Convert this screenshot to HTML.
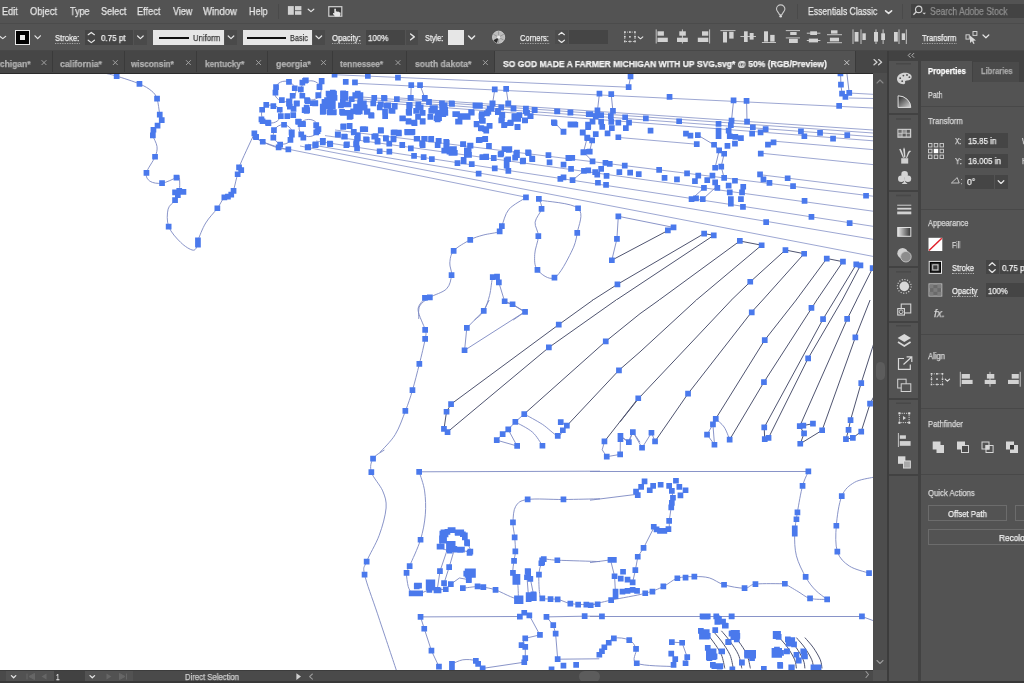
<!DOCTYPE html>
<html><head><meta charset="utf-8"><title>Adobe Illustrator</title>
<style>
html,body{margin:0;padding:0;background:#535353;}
body{width:1024px;height:683px;position:relative;overflow:hidden;font-family:"Liberation Sans",sans-serif;}
.a{position:absolute;}
.t{position:absolute;white-space:nowrap;transform-origin:0 0;display:inline-block;will-change:transform;-webkit-text-stroke:0.25px;}
svg{position:absolute;overflow:visible;}
.ic{fill:#d6d6d6;}
</style></head><body>
<!-- canvas -->
<div class="a" style="left:0;top:74px;width:873px;height:596px;background:#fff;overflow:hidden"></div>
<div class="a" style="left:0;top:0;width:873px;height:670px;overflow:hidden">
<svg id="art" width="873" height="596" viewBox="0 74 873 596" style="position:absolute;left:0;top:74px">
<path d="M334 74.7 L628.6 87.2 M849 93 L873 94.3 M355 83.3 L873 108 M395 97.7 L873 130 M360 96.9 L873 133 M345 97.8 L873 136.7 M340 99.5 L873 140.8 M773 141.1 L873 149.6 M288.8 149.3 L526 197.2 M300 146 L873 256.4 M308 144.3 L873 239.3 M316 141 L873 226.3 M325 135.6 L873 211.2 M335 130 L873 196.2 M760 174.7 L873 188.7 M618 137.4 L696.6 144.2 M761 153.2 L873 164.6 M849 98 L873 98.5" fill="none" stroke="#98a2d0" stroke-width="0.95"/>
<path d="M105.6 73.3 C107.4 73.8 111 74.4 116.7 76.1 C122.3 77.9 133.7 81.4 139.5 83.9 C145.3 86.4 148.5 88.4 151.5 90.9 C154.4 93.3 155.6 94.7 157 98.6 C158.4 102.6 159 110.9 159.8 114.5 C160.6 118.1 162.1 118.2 161.7 120.1 C161.4 121.9 159 124 157.6 125.6 C156.2 127.2 154.2 128.2 153.4 129.8 C152.6 131.4 152.2 132.6 152.8 135.4 C153.4 138.1 156.6 142.9 157 146.5 C157.4 150.1 156.8 152.4 155.1 156.8 C153.3 161.2 147.3 168.8 146.4 172.9 C145.6 177 147.5 179.5 150.1 181.3 C152.7 183 157.6 183.8 162 183.2 C166.4 182.6 173.6 178.7 176.5 177.6 C179.4 176.5 178.8 174.3 179.3 176.5 C179.7 178.7 180 187 179.3 191 C178.6 194.9 176.9 197.2 175.1 200.2 C173.2 203.2 169.2 204.7 168.1 209.1 C167.1 213.5 166.6 221 168.7 226.6 C170.8 232.1 176.6 238.5 180.7 242.4 C184.7 246.4 190.3 249.9 193.2 250.2 C196 250.6 197.1 245.6 197.9 244.7 M197.9 240.2 C199.2 237.3 202.4 228.3 205.7 223 C208.9 217.6 214.3 212.5 217.4 208.2 C220.5 204 222 199.7 224.3 197.4 C226.6 195.1 229.7 196.1 231.3 194.6 C232.9 193.1 233 191.6 234.1 188.2 C235.1 184.8 236.5 177.3 237.7 174.3 C238.9 171.3 241.1 171.3 241.3 170.1 C241.5 169 236.9 173.5 239.1 167.3 C241.2 161.2 251.8 139.1 254.4 133.4 M254.4 133.4 C254.6 134 254.4 135.4 255.8 136.8 C257.1 138.1 259 139.9 262.7 141.8 C266.4 143.6 273.8 146.6 278 147.9 C282.2 149.1 286.3 149 288 149.3 M526.1 197.5 C523.2 199.5 513 204.6 508.9 209.3 C504.9 214.1 503.4 222.4 501.8 226.1 C500.3 229.8 502.8 230 499.7 231.5 C496.6 233 488 233.7 483.1 235.1 C478.2 236.5 475.1 237.2 470.2 239.8 C465.3 242.5 457.1 246.9 453.7 250.8 C450.3 254.7 450.2 259 449.8 263 C449.5 267.1 452.1 270.8 451.5 275.1 C451 279.4 450.2 285.1 446.6 288.8 C443 292.6 434.3 294.6 429.8 297.4 C425.4 300.3 421.6 302.4 419.7 306 C417.9 309.6 418.9 316.8 418.7 318.9 M539.4 200.1 C545.9 201.5 571.8 202.8 578.1 208.3 C584.4 213.7 578.4 225.6 577.2 233 C576.1 240.3 575 244.9 571.2 252.3 C567.4 259.8 560.1 274.7 554.5 277.7 C548.8 280.6 540.8 273.8 537.5 269.9 C534.2 266.1 534.5 260.1 534.7 254.5 C534.8 248.8 538.3 241.6 538.3 236.2 C538.4 230.8 534.6 226.8 535.1 222.2 C535.7 217.7 540.8 212.6 541.6 208.9 C542.3 205.2 539.8 201.6 539.4 200.1 M497.1 276.6 C496.4 276.7 494 273.9 492.8 277 C491.5 280.1 491.1 289.6 489.6 295.3 C488.1 300.9 486.3 306.8 483.8 311 C481.3 315.1 476.1 318.5 474.5 320 M497.1 276.6 L498.8 282.4 L504.6 301.3 L512.6 304.3 L525 311.8 L513.2 320 M423.2 300 C422.3 301.7 417.7 305.2 418.1 310.2 C418.4 315.1 424 325.2 425.2 330 C426.4 334.7 426.2 333.2 425.2 338.8 C424.2 344.5 421.5 355.4 419.4 364 C417.2 372.5 414.8 382.3 412.5 390.1 C410.2 398 408.3 403.6 405.4 411 C402.5 418.4 399.5 427.7 395.2 434.6 C391 441.5 382.5 449.4 380 452.3 M489.2 300 L483.6 310.9 L466.8 327.9 L464.6 350.3 L524.7 311.9 L512 304.3 L504.4 302 M524.2 414 C527.3 415.7 536.9 420.8 542.5 424.4 C548.1 428.1 554.3 434.9 557.7 435.8 C561.1 436.8 561.3 431.9 562.8 430.3 C564.3 428.6 567.2 427 566.9 425.7 C566.5 424.3 561.8 422.7 560.8 422.1 M515.3 421.9 C518.2 423.6 527.8 428.1 532.3 432 C536.9 436 540.8 443.5 542.5 445.7 M508.2 429.5 L517.1 446 L496.8 440.2 L502.6 434.1 L508.2 429.5 L515.3 421.9 L524.2 414 M604.5 441.4 L602.2 449.8 L606.7 456.7 L620.2 454.4 L620.4 435.8 L628.8 442.2 L632.9 432 L640 442.2 M715.7 418.8 C717.1 420.2 721.8 423.5 724.1 427 C726.4 430.4 728.8 437.5 729.7 439.6 M715.7 418.8 L712.9 424.4 L707.1 434.6 L714.5 444.7 L712.9 424.4 M620 435.8 L628.4 442.2 L632.7 431.5 L642.1 447.8 L651.5 432.8 L655 441.4 M667.9 230.5 L673.5 227.4 L618.3 216.3 L616.9 239 L611.8 260.2 M384.4 450 C382.5 451.4 375.3 454.8 373.1 458.5 C370.9 462.2 369.8 466.8 371.4 472.2 C373 477.6 380.2 485 382.7 490.9 C385.1 496.9 386.6 500.6 386.1 508 C385.5 515.4 382.5 526.4 379.2 535.3 C376 544.2 369.1 555 366.6 561.6 C364.2 568.1 362.7 565.8 364.6 574.5 C366.4 583.2 372.2 597.9 377.5 613.8 C382.8 629.7 393.2 660.7 396.3 670.1 M419.2 471.8 L600 471.2 M419.2 471.8 C420.1 475 423.6 483.8 424.6 490.9 C425.6 498.1 426 506.7 425.3 514.8 C424.6 523 423.1 531.2 420.5 539.7 C417.9 548.3 411.9 560.5 409.6 566 C407.3 571.5 406.8 569.4 406.5 572.8 C406.3 576.2 407.4 583.1 408.2 586.5 C409.1 589.9 411.1 592.2 411.7 593.3 M411.7 593.3 L420.2 593.3 L429.4 589.9 L437.2 589.9 L445.8 589.2 L450.9 584.1 L459.4 578 L469 579.7 L472 572.2 L466.2 573.5 M437.2 589.9 L440 571.1 L447.5 549 M444.1 583.1 L449.2 567 L454.3 549.6 M462.8 588.2 C465.3 587.9 474.1 586.7 477.5 586.5 C480.9 586.3 480.3 586.6 483.3 587.2 C486.3 587.7 491 588.3 495.6 589.9 C500.1 591.5 506.8 595.2 510.6 596.7 C514.4 598.3 517.1 598.7 518.5 599.1 M442.4 533.6 C444.1 533 449.2 530.1 452.6 530.2 C456 530.3 460.4 532.3 462.8 534.3 C465.2 536.3 465.7 539.2 466.9 542.1 C468.2 545 471.5 550.4 470.3 551.7 C469.2 553 463.5 550.1 460.1 550 C456.7 549.8 453.1 551.2 449.9 550.7 C446.6 550.1 441.9 549.4 440.7 546.6 C439.4 543.7 442.1 535.8 442.4 533.6 M600 498.8 C593.9 498.9 575.5 499.4 563.5 499.5 C551.4 499.6 535.6 498.3 527.7 499.5 C519.7 500.6 518.2 502.5 515.7 506.3 C513.3 510.1 513.2 517.2 513 522.3 C512.8 527.5 514.3 532.5 514.7 537.3 C515.1 542.2 515.5 547.4 515.4 551.3 C515.3 555.3 514.4 557.3 514 560.9 C513.6 564.5 512.4 569.4 513 572.8 C513.6 576.2 516.5 577 517.4 581.4 C518.3 585.7 518.3 596.2 518.5 599.1 M600 561.6 C592.9 561.3 566.7 560.6 557.3 560.2 C548 559.8 546.4 558.7 543.7 559.2 C541 559.7 542.1 560.7 541.3 563.3 C540.5 565.8 539.2 569.5 538.9 574.5 C538.6 579.5 539 589.3 539.6 593.3 C540.2 597.3 539.3 597.4 542.3 598.4 C545.3 599.4 553 598.6 557.7 599.4 C562.4 600.3 565.5 602.7 570.3 603.5 C575.1 604.4 581.4 604.5 586.4 604.6 C591.3 604.7 597.7 604.3 600 604.2 M527.7 571.1 L527 577.3 L528.7 599.1 M530.4 579 L533.5 594.3 M420.5 616.9 L519.8 616.5 M420.5 616.9 L424.3 628.8 L431.4 650.6 L439 666.7 M524.3 612.8 L529.4 615.5 L539.9 634.9 L525.3 638.3 L521.5 645.2 L525.3 646.9 L525.3 658.1 L524.3 662.2 L482.6 668.4 M451.9 663.9 C453.7 663.3 458.9 660.4 462.8 659.8 C466.8 659.3 472.5 659.4 475.8 660.9 C479.1 662.3 481.5 667.1 482.6 668.4 M546.4 616.9 L584.6 616.2 L600 616.2 M546.4 616.9 L553.3 625 L555.6 633.6 L557.7 659.2 L599.3 658.8 M590 471.5 L808.4 471.5 M808.4 471.5 C807.4 473.9 804.4 479 802.6 485.8 C800.7 492.6 798.7 504.5 797.4 512.4 C796.1 520.4 794.9 526.4 794.7 533.6 C794.5 540.8 794.6 548.5 796.4 555.8 C798.2 563 802.5 571.2 805.6 576.9 C808.8 582.6 811.6 586.1 815.2 589.9 C818.8 593.6 825.1 597.8 827.1 599.4 M784.8 583.7 C787 585 793.9 589.1 798.1 591.6 C802.3 594 805.2 597.1 810.1 598.4 C814.9 599.7 824.3 599.3 827.1 599.4 M873.2 477.3 C870 478.1 859.6 479.3 854.4 482.4 C849.2 485.5 844.8 488.8 841.8 496.1 C838.8 503.3 837.1 516.5 836.3 525.7 C835.6 535 835.2 545 837.4 551.7 C839.5 558.4 844 562.4 849.3 566 C854.6 569.6 865.8 572 869.1 573.2 M590 500.2 L636.1 494.4 M590 605.2 C593.5 604.4 601.9 602.1 611.2 600.1 C620.4 598.1 636.6 595.6 645.3 593.3 C654 591 658 589 663.4 586.5 C668.7 584 672.2 579.9 677.3 578.3 C682.5 576.6 689.1 576.6 694.4 576.6 C699.7 576.5 704.5 576.6 709.4 577.9 C714.4 579.3 718.2 583.1 724.1 584.8 C729.9 586.5 739.3 588.3 744.6 588.2 C749.8 588.1 748.8 584.8 755.5 584.1 C762.2 583.3 779.9 583.8 784.8 583.7 M653.8 527.8 L643.6 547.9 L637.8 556.8 L635.4 570.1 L632.6 582.4 M669.2 521 C669 522.3 670 527.3 668.5 529.2 C666.9 531 662.4 532.1 659.9 531.9 C657.5 531.7 654.8 528.5 653.8 527.8 M671.9 490.9 L672.9 497.8 L671.2 507.3 L669.2 521 M590 562.6 L610.5 559.9 L614.6 576.2 L615.6 596 M590 616.5 L861.9 616.5 L873.2 620.6 M600.2 656.4 C600.9 654.9 602.1 650.2 604.3 647.2 C606.6 644.2 609.7 639.5 613.9 638.3 C618 637.1 625.5 638.3 629.2 640 C632.9 641.8 634.8 645 636.1 648.9 C637.3 652.8 630.5 660.3 636.7 663.2 C643 666.2 667.4 666.1 673.6 666.6 M671.9 642.1 L682.1 642.8 L687.2 657.1 L685.5 663.2 M840.5 70 L840.9 84.6 L842 93.6 M846.5 70 L849.2 92.9 M494.8 89.3 L492.6 103.3 M506.2 88.9 L508.3 103.3 M599.4 93.6 L597.5 110.4 M611.2 94.1 L612.9 110.8 M630.6 76.4 L628.6 87.2 M733.6 100.3 L731.5 120.5 M746.6 101 L747 121.7 M411.2 85 L410.8 97.9 M420 85 L424.8 97.9 M714 144.8 L719.2 150.4 L715.1 167.7 M724.1 153.8 L721.2 166.6 L724.1 177.8 M697.8 135.1 L714 144.8 M583.5 152.1 L587.2 137.7 M589.7 151.6 L592.1 140.5 M583.5 152.1 L592.5 161.3 M553.9 122.2 L563.5 131.7 M572.6 180 L583.9 171 M691.6 199.2 L703.9 187.9 M702.8 199.2 L715.1 187.9 M295.9 91.5 C295.7 92.2 295.5 94.6 294.8 96 C294.1 97.3 293 98.6 291.8 99.5 C290.6 100.5 289 101.2 287.5 101.5 C286 101.9 284.2 101.9 282.7 101.5 C281.2 101.2 279.6 100.5 278.4 99.5 C277.2 98.6 276.1 97.3 275.4 96 C274.8 94.6 274.4 93 274.4 91.5 C274.4 90 274.8 88.4 275.4 87 C276.1 85.7 277.2 84.4 278.4 83.4 C279.6 82.5 281.2 81.8 282.7 81.4 C284.2 81.1 286 81.1 287.5 81.4 C289 81.8 290.6 82.5 291.8 83.4 C293 84.4 294.1 85.7 294.8 87 C295.5 88.4 295.7 90.7 295.9 91.5 M321.2 90.4 C321 91.1 320.8 93.3 320.2 94.6 C319.5 95.9 318.5 97.1 317.3 98 C316.2 98.8 314.6 99.5 313.2 99.8 C311.7 100.1 310.1 100.1 308.6 99.8 C307.1 99.5 305.6 98.8 304.5 98 C303.3 97.1 302.3 95.9 301.6 94.6 C301 93.3 300.6 91.8 300.6 90.4 C300.6 89 301 87.5 301.6 86.2 C302.3 85 303.3 83.7 304.5 82.9 C305.6 82 307.1 81.3 308.6 81 C310.1 80.7 311.7 80.7 313.2 81 C314.6 81.3 316.2 82 317.3 82.9 C318.5 83.7 319.5 85 320.2 86.2 C320.8 87.5 321 89.7 321.2 90.4 M280.8 114 C280.7 114.7 280.5 116.8 279.9 118 C279.3 119.1 278.3 120.3 277.2 121.1 C276.1 121.9 274.7 122.5 273.3 122.8 C271.9 123.1 270.4 123.1 269 122.8 C267.6 122.5 266.2 121.9 265.1 121.1 C264 120.3 263 119.1 262.4 118 C261.8 116.8 261.5 115.3 261.5 114 C261.5 112.7 261.8 111.3 262.4 110.1 C263 109 264 107.8 265.1 107 C266.2 106.2 267.6 105.5 269 105.2 C270.4 105 271.9 105 273.3 105.2 C274.7 105.5 276.1 106.2 277.2 107 C278.3 107.8 279.3 109 279.9 110.1 C280.5 111.3 280.7 113.4 280.8 114 M292.6 134.5 C292.5 135.2 292.3 137.4 291.7 138.6 C291.1 139.9 290.1 141.1 289 142 C287.9 142.9 286.5 143.6 285.1 143.9 C283.8 144.2 282.2 144.2 280.8 143.9 C279.5 143.6 278 142.9 276.9 142 C275.8 141.1 274.9 139.9 274.3 138.6 C273.7 137.4 273.3 135.9 273.3 134.5 C273.3 133.1 273.7 131.5 274.3 130.3 C274.9 129 275.8 127.8 276.9 126.9 C278 126 279.5 125.3 280.8 125 C282.2 124.7 283.8 124.7 285.1 125 C286.5 125.3 287.9 126 289 126.9 C290.1 127.8 291.1 129 291.7 130.3 C292.3 131.5 292.5 133.8 292.6 134.5 M318.4 128 C318.3 128.6 318.1 130.6 317.5 131.7 C316.9 132.9 315.9 134 314.8 134.7 C313.7 135.5 312.3 136.1 310.9 136.4 C309.5 136.7 308 136.7 306.6 136.4 C305.2 136.1 303.8 135.5 302.7 134.7 C301.6 134 300.6 132.9 300 131.7 C299.4 130.6 299.1 129.3 299.1 128 C299.1 126.8 299.4 125.4 300 124.3 C300.6 123.2 301.6 122.1 302.7 121.3 C303.8 120.5 305.2 119.9 306.6 119.6 C308 119.4 309.5 119.4 310.9 119.6 C312.3 119.9 313.7 120.5 314.8 121.3 C315.9 122.1 316.9 123.2 317.5 124.3 C318.1 125.4 318.3 127.4 318.4 128 M254.6 132.3 C254.9 133.2 254.7 136.1 256.1 137.7 C257.5 139.3 259.4 140.4 263.2 142 C267 143.6 274.5 146.1 278.7 147.3 C282.9 148.6 286.7 149.1 288.3 149.5" fill="none" stroke="#7c88c2" stroke-width="0.9"/>
<path d="M593 300 L558.8 324.6 L451.1 404.1 L446.5 411.7 L444 429 L447.5 432 L548.8 347.5 L616.1 300 M640 313.7 L605.7 341.4 L524.2 414 M566.9 425.7 L618.9 370.3 L640 351.9 M638.2 398.3 L604.5 441.4 M659.2 300 L640 313.7 M696.4 300 L640 351.9 M731.5 300 L639 398 L620 421.9 M762.7 300 L751.5 312.2 L688 393.7 L655 441.4 M796.2 300 L764.7 340.1 L715.7 418.8 M816.8 300 L811.7 308.1 L764 382 L729.7 439.6 M834.7 300 L823.1 319 L764.2 427.5 L764.7 439.1 M842.2 300 L808.1 358.4 L768.5 437.9 L764.7 439.1 M856.7 300 L847.5 318.5 L799.8 426.2 M870.1 300 L855.4 337.3 L822.1 430.3 L800.3 443.7 L804.1 433.3 L799.8 426.2 L813 423.7 M873.9 343.2 L861.2 383 L850.5 420.1 L848.5 430 L846 439.1 L852.8 437.9 L861.2 431.5 L870.1 403.6 L873.9 396.5 M667.9 230.5 L611.8 260.2 M704.3 630.8 C705.7 632.5 710 637.1 712.8 641.1 C715.7 645 719.4 650.2 721.4 654.7 C723.3 659.3 724.2 666.1 724.8 668.4 M712.8 630.8 C714.2 632.5 718.5 637.1 721.4 641.1 C724.2 645 727.9 650.2 729.9 654.7 C731.9 659.3 732.7 666.1 733.3 668.4 M721.4 630.8 C722.8 632.5 727 637.1 729.9 641.1 C732.7 645 736.4 650.2 738.4 654.7 C740.4 659.3 741.3 666.1 741.8 668.4 M729.9 630.8 C731.3 632.5 735.6 637.1 738.4 641.1 C741.3 645 745 650.2 746.9 654.7 C748.9 659.3 749.8 666.1 750.4 668.4 M779.4 637.6 C780.8 639.4 785.3 644.2 787.9 647.9 C790.4 651.6 793.3 656.4 794.7 659.8 C796.1 663.2 796.1 666.9 796.4 668.4 M787.9 637.6 C789.3 639.4 793.9 644.2 796.4 647.9 C799 651.6 801.8 656.4 803.2 659.8 C804.7 663.2 804.7 666.9 804.9 668.4 M796.4 637.6 C797.8 639.4 802.4 644.2 804.9 647.9 C807.5 651.6 810.3 656.4 811.8 659.8 C813.2 663.2 813.2 666.9 813.5 668.4 M804.9 637.6 C806.4 639.4 810.9 644.2 813.5 647.9 C816 651.6 818.9 656.4 820.3 659.8 C821.7 663.2 821.7 666.9 822 668.4" fill="none" stroke="#4f5470" stroke-width="1"/>
<clipPath id="ce"><rect x="0" y="74" width="873" height="226"/></clipPath><path clip-path="url(#ce)" d="M704.1 233.6 L617.5 284.3 L590 301.9 M704.1 233.6 L713.8 235.3 L590 317.4 M739.8 241 L618.3 329.9 M739.8 241 L761.6 245.2 L660.8 329.9 M785.4 250 L750.3 281.8 L700.4 329.9 M785.4 250 L804.1 253.7 L751.7 312.3 L737.3 329.9 M826.8 258.5 L774.1 329.9 M826.8 258.5 L842.9 261.7 L811.5 307.8 L796.7 329.9 M856.2 264.5 L823.1 319.1 L816.6 329.9 M856.2 264.5 L860.5 265.3 L826.5 329.9 M872.6 268.2 L847.1 318.9 L840.6 329.9 M872.6 268.2 L880 269.9" fill="none" stroke="#4f5470" stroke-width="1"/>
<path d="M113.8 73.3h5.7v5.7h-5.7zM136.6 81.1h5.7v5.7h-5.7zM154.2 95.8h5.7v5.7h-5.7zM156.9 111.7h5.7v5.7h-5.7zM158.9 117.2h5.7v5.7h-5.7zM154.7 122.8h5.7v5.7h-5.7zM150.6 126.9h5.7v5.7h-5.7zM150 132.5h5.7v5.7h-5.7zM152.2 153.9h5.7v5.7h-5.7zM143.6 170.1h5.7v5.7h-5.7zM159.2 180.3h5.7v5.7h-5.7zM173.6 174.8h5.7v5.7h-5.7zM172.2 189.5h5.7v5.7h-5.7zM176.4 188.1h5.7v5.7h-5.7zM180.6 189h5.7v5.7h-5.7zM175 192.3h5.7v5.7h-5.7zM172.2 197.3h5.7v5.7h-5.7zM165.8 223.7h5.7v5.7h-5.7zM195.1 237.4h5.7v5.7h-5.7zM195.1 241.8h5.7v5.7h-5.7zM214.5 205.4h5.7v5.7h-5.7zM221.5 194.5h5.7v5.7h-5.7zM225.1 193.7h5.7v5.7h-5.7zM228.4 191.8h5.7v5.7h-5.7zM230.7 188.1h5.7v5.7h-5.7zM236.2 164.5h5.7v5.7h-5.7zM238.4 167.3h5.7v5.7h-5.7zM234.8 171.4h5.7v5.7h-5.7zM251.5 130.6h5.7v5.7h-5.7zM252.9 133.9h5.7v5.7h-5.7zM259.9 138.9h5.7v5.7h-5.7zM331.7 71.9h5.7v5.7h-5.7zM365 73h5.7v5.7h-5.7zM395.1 74.7h5.7v5.7h-5.7zM286.1 79h5.7v5.7h-5.7zM302.2 77.9h5.7v5.7h-5.7zM318.8 77.9h5.7v5.7h-5.7zM342.9 79h5.7v5.7h-5.7zM352.1 79.6h5.7v5.7h-5.7zM408.4 82.2h5.7v5.7h-5.7zM417.2 82.2h5.7v5.7h-5.7zM273.2 84.3h5.7v5.7h-5.7zM291.9 85.4h5.7v5.7h-5.7zM298 86.5h5.7v5.7h-5.7zM316.6 84.3h5.7v5.7h-5.7zM272.6 89.7h5.7v5.7h-5.7zM289.8 92.9h5.7v5.7h-5.7zM299.5 92.9h5.7v5.7h-5.7zM315.6 92.5h5.7v5.7h-5.7zM330 89.7h5.7v5.7h-5.7zM340.3 90.4h5.7v5.7h-5.7zM354.9 90.8h5.7v5.7h-5.7zM279 97.2h5.7v5.7h-5.7zM286.6 99.4h5.7v5.7h-5.7zM294.1 100.5h5.7v5.7h-5.7zM304.8 98.3h5.7v5.7h-5.7zM312.3 100.5h5.7v5.7h-5.7zM324.2 97.2h5.7v5.7h-5.7zM331.7 95.1h5.7v5.7h-5.7zM342.4 95.1h5.7v5.7h-5.7zM348.9 96.2h5.7v5.7h-5.7zM357.5 95.1h5.7v5.7h-5.7zM371.4 95.1h5.7v5.7h-5.7zM381.1 95.1h5.7v5.7h-5.7zM394 96.2h5.7v5.7h-5.7zM408 95.1h5.7v5.7h-5.7zM421.9 95.1h5.7v5.7h-5.7zM263.4 102h5.7v5.7h-5.7zM270.5 103.2h5.7v5.7h-5.7zM276.9 106.9h5.7v5.7h-5.7zM287 103.7h5.7v5.7h-5.7zM303.8 104.7h5.7v5.7h-5.7zM319.9 103.7h5.7v5.7h-5.7zM327.4 101.5h5.7v5.7h-5.7zM338.1 102.6h5.7v5.7h-5.7zM345.6 101.5h5.7v5.7h-5.7zM353.2 103.7h5.7v5.7h-5.7zM361.8 104.7h5.7v5.7h-5.7zM370.4 100.5h5.7v5.7h-5.7zM377.9 101.5h5.7v5.7h-5.7zM385.4 102.6h5.7v5.7h-5.7zM391.8 103.7h5.7v5.7h-5.7zM406.9 102.6h5.7v5.7h-5.7zM415.5 101.5h5.7v5.7h-5.7zM426.2 99.4h5.7v5.7h-5.7zM439.1 100.5h5.7v5.7h-5.7zM448.8 100.5h5.7v5.7h-5.7zM259.3 106.9h5.7v5.7h-5.7zM278 113.3h5.7v5.7h-5.7zM284.4 113.3h5.7v5.7h-5.7zM290.4 112.3h5.7v5.7h-5.7zM303.8 108h5.7v5.7h-5.7zM319.9 109h5.7v5.7h-5.7zM327.4 108h5.7v5.7h-5.7zM339.2 109h5.7v5.7h-5.7zM346.7 110.1h5.7v5.7h-5.7zM355.3 109h5.7v5.7h-5.7zM363.9 109h5.7v5.7h-5.7zM368.2 112.3h5.7v5.7h-5.7zM382.2 109h5.7v5.7h-5.7zM389.7 108h5.7v5.7h-5.7zM405.8 109h5.7v5.7h-5.7zM413.3 108h5.7v5.7h-5.7zM419.8 110.1h5.7v5.7h-5.7zM428.4 108h5.7v5.7h-5.7zM434.8 110.1h5.7v5.7h-5.7zM442.3 106.9h5.7v5.7h-5.7zM453.1 111.2h5.7v5.7h-5.7zM258.6 116.6h5.7v5.7h-5.7zM265.1 119.8h5.7v5.7h-5.7zM281.2 121.9h5.7v5.7h-5.7zM295.2 118.7h5.7v5.7h-5.7zM299.5 120.9h5.7v5.7h-5.7zM313.4 122.6h5.7v5.7h-5.7zM315.6 126.2h5.7v5.7h-5.7zM340.3 124.1h5.7v5.7h-5.7zM346.7 123.4h5.7v5.7h-5.7zM347.8 113.3h5.7v5.7h-5.7zM399.4 115.5h5.7v5.7h-5.7zM405.8 118.7h5.7v5.7h-5.7zM411.2 119.8h5.7v5.7h-5.7zM419.8 118.7h5.7v5.7h-5.7zM434.8 116.6h5.7v5.7h-5.7zM455.2 118.7h5.7v5.7h-5.7zM271.1 127.3h5.7v5.7h-5.7zM288.7 129.5h5.7v5.7h-5.7zM298.4 131.6h5.7v5.7h-5.7zM313.4 129.5h5.7v5.7h-5.7zM334.9 131.6h5.7v5.7h-5.7zM341.3 133.8h5.7v5.7h-5.7zM351 129.5h5.7v5.7h-5.7zM360.7 126.2h5.7v5.7h-5.7zM377.9 127.3h5.7v5.7h-5.7zM391.8 129.5h5.7v5.7h-5.7zM396.1 130.5h5.7v5.7h-5.7zM404.7 129.5h5.7v5.7h-5.7zM409 129.5h5.7v5.7h-5.7zM270.5 134.8h5.7v5.7h-5.7zM287.6 137h5.7v5.7h-5.7zM300.5 134.8h5.7v5.7h-5.7zM319.9 138h5.7v5.7h-5.7zM327.4 141.3h5.7v5.7h-5.7zM354.2 135.9h5.7v5.7h-5.7zM363.9 137h5.7v5.7h-5.7zM371.4 133.8h5.7v5.7h-5.7zM374.6 138h5.7v5.7h-5.7zM383.2 135.9h5.7v5.7h-5.7zM390.8 135.9h5.7v5.7h-5.7zM414.4 135.9h5.7v5.7h-5.7zM421.9 135.9h5.7v5.7h-5.7zM428.4 135.9h5.7v5.7h-5.7zM435.9 138h5.7v5.7h-5.7zM443.4 139.1h5.7v5.7h-5.7zM275.8 144.5h5.7v5.7h-5.7zM285.5 146.6h5.7v5.7h-5.7zM304.8 144.5h5.7v5.7h-5.7zM312.3 142.3h5.7v5.7h-5.7zM343.5 142.3h5.7v5.7h-5.7zM353.2 141.3h5.7v5.7h-5.7zM354.2 145.6h5.7v5.7h-5.7zM376.8 148.4h5.7v5.7h-5.7zM386.5 148.8h5.7v5.7h-5.7zM399.4 142.3h5.7v5.7h-5.7zM408 145.6h5.7v5.7h-5.7zM419.8 142.3h5.7v5.7h-5.7zM434.8 142.3h5.7v5.7h-5.7zM443.4 143.4h5.7v5.7h-5.7zM449.8 146.6h5.7v5.7h-5.7zM411.2 153.1h5.7v5.7h-5.7zM420.8 154.2h5.7v5.7h-5.7zM429 156.3h5.7v5.7h-5.7zM446.6 148.8h5.7v5.7h-5.7zM452 149.9h5.7v5.7h-5.7zM454.6 160.2h5.7v5.7h-5.7zM627.7 73.6h5.7v5.7h-5.7zM625.8 84.3h5.7v5.7h-5.7zM491.9 86.5h5.7v5.7h-5.7zM503.3 86.1h5.7v5.7h-5.7zM596.6 90.8h5.7v5.7h-5.7zM608.4 91.2h5.7v5.7h-5.7zM472.6 102.6h5.7v5.7h-5.7zM476.9 102.6h5.7v5.7h-5.7zM489.8 100.5h5.7v5.7h-5.7zM505.5 100.5h5.7v5.7h-5.7zM510.6 105.4h5.7v5.7h-5.7zM523.1 105.8h5.7v5.7h-5.7zM531.7 106.9h5.7v5.7h-5.7zM554.2 108.4h5.7v5.7h-5.7zM567.6 109.5h5.7v5.7h-5.7zM594.6 107.5h5.7v5.7h-5.7zM610.1 108h5.7v5.7h-5.7zM439.3 105.8h5.7v5.7h-5.7zM442.5 110.1h5.7v5.7h-5.7zM457.6 113.3h5.7v5.7h-5.7zM462.9 113.3h5.7v5.7h-5.7zM468.9 109.7h5.7v5.7h-5.7zM479 111.2h5.7v5.7h-5.7zM485.5 109h5.7v5.7h-5.7zM488.7 105.8h5.7v5.7h-5.7zM495.2 108h5.7v5.7h-5.7zM498.4 104.7h5.7v5.7h-5.7zM499.5 112.3h5.7v5.7h-5.7zM512.3 113.3h5.7v5.7h-5.7zM516.6 112.3h5.7v5.7h-5.7zM524.2 110.1h5.7v5.7h-5.7zM527.4 113.3h5.7v5.7h-5.7zM587.5 111.2h5.7v5.7h-5.7zM592.9 113.3h5.7v5.7h-5.7zM598.3 112.3h5.7v5.7h-5.7zM608 113.3h5.7v5.7h-5.7zM622.3 114.4h5.7v5.7h-5.7zM643 115.5h5.7v5.7h-5.7zM473.7 120.9h5.7v5.7h-5.7zM479 117.6h5.7v5.7h-5.7zM486.6 123h5.7v5.7h-5.7zM482.3 126.2h5.7v5.7h-5.7zM478 125.2h5.7v5.7h-5.7zM498.4 117.6h5.7v5.7h-5.7zM501.6 121.9h5.7v5.7h-5.7zM508 119.8h5.7v5.7h-5.7zM514.5 124.1h5.7v5.7h-5.7zM522 117.6h5.7v5.7h-5.7zM551 119.4h5.7v5.7h-5.7zM560.7 128.8h5.7v5.7h-5.7zM568.2 121.9h5.7v5.7h-5.7zM572.5 121.9h5.7v5.7h-5.7zM580 129.5h5.7v5.7h-5.7zM585.4 123h5.7v5.7h-5.7zM589.7 118.7h5.7v5.7h-5.7zM598.3 118.7h5.7v5.7h-5.7zM599.4 124.1h5.7v5.7h-5.7zM604.7 130.5h5.7v5.7h-5.7zM609 125.2h5.7v5.7h-5.7zM608.4 119.1h5.7v5.7h-5.7zM615.5 119.8h5.7v5.7h-5.7zM623 125.2h5.7v5.7h-5.7zM626.2 119.8h5.7v5.7h-5.7zM615.5 134.4h5.7v5.7h-5.7zM647.7 127.7h5.7v5.7h-5.7zM476.9 137h5.7v5.7h-5.7zM482.3 135.9h5.7v5.7h-5.7zM486.1 143h5.7v5.7h-5.7zM584.3 134.8h5.7v5.7h-5.7zM589.3 137.6h5.7v5.7h-5.7zM592.9 131.2h5.7v5.7h-5.7zM441.4 147.7h5.7v5.7h-5.7zM460.4 141.3h5.7v5.7h-5.7zM467.2 142.8h5.7v5.7h-5.7zM464 148.8h5.7v5.7h-5.7zM466.2 152h5.7v5.7h-5.7zM501.6 146.2h5.7v5.7h-5.7zM505.9 147.1h5.7v5.7h-5.7zM498.4 150.9h5.7v5.7h-5.7zM513.4 150.9h5.7v5.7h-5.7zM512.3 154.8h5.7v5.7h-5.7zM525.2 149.4h5.7v5.7h-5.7zM529.5 156.3h5.7v5.7h-5.7zM545.6 152.4h5.7v5.7h-5.7zM546.7 159.5h5.7v5.7h-5.7zM566.1 155.2h5.7v5.7h-5.7zM580.7 149.2h5.7v5.7h-5.7zM586.9 148.8h5.7v5.7h-5.7zM589.7 158.5h5.7v5.7h-5.7zM460.8 158.5h5.7v5.7h-5.7zM468.9 161.3h5.7v5.7h-5.7zM480.1 154.2h5.7v5.7h-5.7zM483.3 153.7h5.7v5.7h-5.7zM490.9 155.2h5.7v5.7h-5.7zM491.9 165.5h5.7v5.7h-5.7zM503.8 157.4h5.7v5.7h-5.7zM503.8 162.8h5.7v5.7h-5.7zM505.5 168.1h5.7v5.7h-5.7zM519.9 158.5h5.7v5.7h-5.7zM560.7 161.7h5.7v5.7h-5.7zM568.2 166h5.7v5.7h-5.7zM602.6 160h5.7v5.7h-5.7zM606.9 161h5.7v5.7h-5.7zM598.3 166h5.7v5.7h-5.7zM621.9 162.8h5.7v5.7h-5.7zM616.5 169.2h5.7v5.7h-5.7zM627.3 169.8h5.7v5.7h-5.7zM635.9 171.3h5.7v5.7h-5.7zM656.3 167.1h5.7v5.7h-5.7zM475.8 170.7h5.7v5.7h-5.7zM557.5 176.1h5.7v5.7h-5.7zM560.7 174.6h5.7v5.7h-5.7zM569.7 177.2h5.7v5.7h-5.7zM581.1 168.1h5.7v5.7h-5.7zM585.4 167.5h5.7v5.7h-5.7zM592.3 169.2h5.7v5.7h-5.7zM594.4 171.8h5.7v5.7h-5.7zM603.7 173.1h5.7v5.7h-5.7zM595.1 179.9h5.7v5.7h-5.7zM603.2 182.1h5.7v5.7h-5.7zM523.1 194.6h5.7v5.7h-5.7zM536 196.1h5.7v5.7h-5.7zM837.6 70.5h5.7v5.7h-5.7zM838.1 81.7h5.7v5.7h-5.7zM839.2 90.7h5.7v5.7h-5.7zM842.6 94.1h5.7v5.7h-5.7zM846.4 90.1h5.7v5.7h-5.7zM836.3 103.1h5.7v5.7h-5.7zM666.7 94.1h5.7v5.7h-5.7zM730.7 97.5h5.7v5.7h-5.7zM743.7 98.1h5.7v5.7h-5.7zM676.3 118.4h5.7v5.7h-5.7zM728.7 117.7h5.7v5.7h-5.7zM744.2 118.8h5.7v5.7h-5.7zM715.7 121.1h5.7v5.7h-5.7zM728 122.2h5.7v5.7h-5.7zM750 124.4h5.7v5.7h-5.7zM762.8 126.2h5.7v5.7h-5.7zM798.1 128.5h5.7v5.7h-5.7zM817.2 130h5.7v5.7h-5.7zM844.4 132.3h5.7v5.7h-5.7zM683.1 130.7h5.7v5.7h-5.7zM687.6 132.7h5.7v5.7h-5.7zM695 132.3h5.7v5.7h-5.7zM715.7 127.8h5.7v5.7h-5.7zM715.7 133.4h5.7v5.7h-5.7zM725.8 127.8h5.7v5.7h-5.7zM726.9 133.4h5.7v5.7h-5.7zM732.5 134.1h5.7v5.7h-5.7zM738.1 135.2h5.7v5.7h-5.7zM749.3 130.7h5.7v5.7h-5.7zM757.7 129.6h5.7v5.7h-5.7zM801.5 133.4h5.7v5.7h-5.7zM830.2 135.7h5.7v5.7h-5.7zM693.9 141.3h5.7v5.7h-5.7zM711.2 141.9h5.7v5.7h-5.7zM724.6 143.1h5.7v5.7h-5.7zM732.1 140.8h5.7v5.7h-5.7zM716.3 147.6h5.7v5.7h-5.7zM721.3 150.9h5.7v5.7h-5.7zM765.1 141.7h5.7v5.7h-5.7zM770.7 139.5h5.7v5.7h-5.7zM757.9 150.7h5.7v5.7h-5.7zM712.3 164.9h5.7v5.7h-5.7zM718.4 163.7h5.7v5.7h-5.7zM661.7 175h5.7v5.7h-5.7zM674.1 176.5h5.7v5.7h-5.7zM684.2 170.5h5.7v5.7h-5.7zM695.4 172.7h5.7v5.7h-5.7zM692.1 178.3h5.7v5.7h-5.7zM704.4 177.2h5.7v5.7h-5.7zM709.6 172.7h5.7v5.7h-5.7zM721.3 175h5.7v5.7h-5.7zM732.1 177.9h5.7v5.7h-5.7zM757.2 171.6h5.7v5.7h-5.7zM760.6 176.5h5.7v5.7h-5.7zM766.6 180.1h5.7v5.7h-5.7zM784.8 175.4h5.7v5.7h-5.7zM790.2 183.3h5.7v5.7h-5.7zM701.1 185.1h5.7v5.7h-5.7zM712.3 179.5h5.7v5.7h-5.7zM714.5 185.1h5.7v5.7h-5.7zM725.8 182.8h5.7v5.7h-5.7zM726.9 189.6h5.7v5.7h-5.7zM740.4 183.9h5.7v5.7h-5.7zM739.2 189.6h5.7v5.7h-5.7zM688.7 196.3h5.7v5.7h-5.7zM693.2 195.6h5.7v5.7h-5.7zM699.9 196.3h5.7v5.7h-5.7zM728 196.3h5.7v5.7h-5.7zM728 200.8h5.7v5.7h-5.7zM738.1 196.3h5.7v5.7h-5.7zM801.7 198.1h5.7v5.7h-5.7zM863.2 192.9h5.7v5.7h-5.7zM538.7 206.1h5.7v5.7h-5.7zM575.2 205.4h5.7v5.7h-5.7zM499 223.2h5.7v5.7h-5.7zM496.8 228.6h5.7v5.7h-5.7zM467.4 237h5.7v5.7h-5.7zM450.8 248h5.7v5.7h-5.7zM535.5 233.3h5.7v5.7h-5.7zM574.4 230.1h5.7v5.7h-5.7zM448.7 272.2h5.7v5.7h-5.7zM534.6 267.1h5.7v5.7h-5.7zM551.6 274.8h5.7v5.7h-5.7zM489.9 274.2h5.7v5.7h-5.7zM494.2 273.7h5.7v5.7h-5.7zM496 279.5h5.7v5.7h-5.7zM427 294.6h5.7v5.7h-5.7zM501.8 298.4h5.7v5.7h-5.7zM509.7 301.4h5.7v5.7h-5.7zM522.2 309h5.7v5.7h-5.7zM480.9 308.1h5.7v5.7h-5.7zM808.6 214.1h5.7v5.7h-5.7zM846.8 220.3h5.7v5.7h-5.7zM763.3 219.2h5.7v5.7h-5.7zM615.5 213.5h5.7v5.7h-5.7zM665 227.6h5.7v5.7h-5.7zM670.7 224.5h5.7v5.7h-5.7zM614.1 236.1h5.7v5.7h-5.7zM609 257.4h5.7v5.7h-5.7zM701.3 230.8h5.7v5.7h-5.7zM710.9 232.5h5.7v5.7h-5.7zM737 238.1h5.7v5.7h-5.7zM758.8 242.4h5.7v5.7h-5.7zM782.6 247.2h5.7v5.7h-5.7zM801.3 250.9h5.7v5.7h-5.7zM823.9 255.7h5.7v5.7h-5.7zM840.1 258.8h5.7v5.7h-5.7zM853.4 261.6h5.7v5.7h-5.7zM857.6 262.5h5.7v5.7h-5.7zM869.8 265.3h5.7v5.7h-5.7zM614.6 281.5h5.7v5.7h-5.7zM747.4 278.9h5.7v5.7h-5.7zM748.9 309.5h5.7v5.7h-5.7zM808.6 305h5.7v5.7h-5.7zM820.2 316.3h5.7v5.7h-5.7zM844.3 316h5.7v5.7h-5.7zM740.1 204.1h5.7v5.7h-5.7zM464 325.1h5.7v5.7h-5.7zM461.7 347.4h5.7v5.7h-5.7zM422.3 327.1h5.7v5.7h-5.7zM422.3 336h5.7v5.7h-5.7zM416.5 361.1h5.7v5.7h-5.7zM409.6 387.3h5.7v5.7h-5.7zM402.5 408.1h5.7v5.7h-5.7zM555.9 321.8h5.7v5.7h-5.7zM546 344.6h5.7v5.7h-5.7zM602.9 338.5h5.7v5.7h-5.7zM616.1 367.5h5.7v5.7h-5.7zM448.2 401.3h5.7v5.7h-5.7zM443.7 408.9h5.7v5.7h-5.7zM441.1 426.1h5.7v5.7h-5.7zM444.7 429.2h5.7v5.7h-5.7zM521.4 411.2h5.7v5.7h-5.7zM512.5 419h5.7v5.7h-5.7zM505.4 426.6h5.7v5.7h-5.7zM499.8 431.2h5.7v5.7h-5.7zM493.9 437.3h5.7v5.7h-5.7zM514.3 443.1h5.7v5.7h-5.7zM539.6 442.9h5.7v5.7h-5.7zM557.9 419.3h5.7v5.7h-5.7zM564 422.8h5.7v5.7h-5.7zM560 427.4h5.7v5.7h-5.7zM554.9 433h5.7v5.7h-5.7zM635.4 395.4h5.7v5.7h-5.7zM601.6 438.6h5.7v5.7h-5.7zM617.6 433h5.7v5.7h-5.7zM617.6 436.3h5.7v5.7h-5.7zM626 439.3h5.7v5.7h-5.7zM630 429.2h5.7v5.7h-5.7zM603.9 453.8h5.7v5.7h-5.7zM617.3 451.5h5.7v5.7h-5.7zM852.5 334.5h5.7v5.7h-5.7zM761.9 337.3h5.7v5.7h-5.7zM805.3 355.5h5.7v5.7h-5.7zM761.1 379.2h5.7v5.7h-5.7zM858.4 380.2h5.7v5.7h-5.7zM867.2 400.7h5.7v5.7h-5.7zM685.2 390.8h5.7v5.7h-5.7zM712.9 416h5.7v5.7h-5.7zM710.1 421.6h5.7v5.7h-5.7zM704.2 431.7h5.7v5.7h-5.7zM711.6 441.9h5.7v5.7h-5.7zM726.8 436.8h5.7v5.7h-5.7zM761.4 424.6h5.7v5.7h-5.7zM761.9 436.3h5.7v5.7h-5.7zM765.7 435h5.7v5.7h-5.7zM796.9 423.3h5.7v5.7h-5.7zM800.5 422.8h5.7v5.7h-5.7zM810.1 420.8h5.7v5.7h-5.7zM801.2 430.5h5.7v5.7h-5.7zM819.3 427.4h5.7v5.7h-5.7zM797.4 440.9h5.7v5.7h-5.7zM847.7 417.2h5.7v5.7h-5.7zM845.7 427.1h5.7v5.7h-5.7zM858.4 428.7h5.7v5.7h-5.7zM843.1 436.3h5.7v5.7h-5.7zM850 435h5.7v5.7h-5.7zM639.2 444.9h5.7v5.7h-5.7zM648.6 429.9h5.7v5.7h-5.7zM652.2 438.6h5.7v5.7h-5.7zM370.2 455.7h5.7v5.7h-5.7zM368.5 469.3h5.7v5.7h-5.7zM363.8 558.7h5.7v5.7h-5.7zM361.7 571.7h5.7v5.7h-5.7zM416.3 469h5.7v5.7h-5.7zM417.7 536.9h5.7v5.7h-5.7zM406.8 563.2h5.7v5.7h-5.7zM403.7 570h5.7v5.7h-5.7zM408.8 590.5h5.7v5.7h-5.7zM413.9 583.6h5.7v5.7h-5.7zM417.3 590.5h5.7v5.7h-5.7zM426.5 581.9h5.7v5.7h-5.7zM426.5 587h5.7v5.7h-5.7zM434.4 587h5.7v5.7h-5.7zM442.9 586.4h5.7v5.7h-5.7zM441.2 580.2h5.7v5.7h-5.7zM448 581.2h5.7v5.7h-5.7zM437.1 568.3h5.7v5.7h-5.7zM446.3 564.2h5.7v5.7h-5.7zM460 585.3h5.7v5.7h-5.7zM466.1 576.8h5.7v5.7h-5.7zM463.4 570.7h5.7v5.7h-5.7zM469.2 569.3h5.7v5.7h-5.7zM474.7 583.6h5.7v5.7h-5.7zM480.5 584.3h5.7v5.7h-5.7zM492.7 587h5.7v5.7h-5.7zM439.5 530.7h5.7v5.7h-5.7zM444.6 529h5.7v5.7h-5.7zM449.7 527.3h5.7v5.7h-5.7zM454.9 530.1h5.7v5.7h-5.7zM460 531.4h5.7v5.7h-5.7zM464.1 539.3h5.7v5.7h-5.7zM467.5 548.8h5.7v5.7h-5.7zM457.3 547.1h5.7v5.7h-5.7zM451.5 546.1h5.7v5.7h-5.7zM447 542.7h5.7v5.7h-5.7zM447 547.8h5.7v5.7h-5.7zM441.2 536.5h5.7v5.7h-5.7zM437.8 543.7h5.7v5.7h-5.7zM524.8 496.6h5.7v5.7h-5.7zM560.6 496.6h5.7v5.7h-5.7zM510.1 519.5h5.7v5.7h-5.7zM511.8 534.5h5.7v5.7h-5.7zM512.5 548.5h5.7v5.7h-5.7zM511.2 558h5.7v5.7h-5.7zM510.1 570h5.7v5.7h-5.7zM512.9 575.1h5.7v5.7h-5.7zM514.6 578.5h5.7v5.7h-5.7zM524.8 568.3h5.7v5.7h-5.7zM524.1 574.4h5.7v5.7h-5.7zM527.5 576.1h5.7v5.7h-5.7zM540.9 556.3h5.7v5.7h-5.7zM554.5 557.4h5.7v5.7h-5.7zM538.5 560.4h5.7v5.7h-5.7zM536.1 571.7h5.7v5.7h-5.7zM515.6 596.3h5.7v5.7h-5.7zM525.8 596.3h5.7v5.7h-5.7zM530.6 591.5h5.7v5.7h-5.7zM539.5 595.6h5.7v5.7h-5.7zM547.7 596.3h5.7v5.7h-5.7zM554.8 596.6h5.7v5.7h-5.7zM567.5 600.7h5.7v5.7h-5.7zM575.3 601.7h5.7v5.7h-5.7zM583.5 601.7h5.7v5.7h-5.7zM587.9 602.4h5.7v5.7h-5.7zM594.8 601.4h5.7v5.7h-5.7zM417.7 614h5.7v5.7h-5.7zM517 613.7h5.7v5.7h-5.7zM521.4 609.9h5.7v5.7h-5.7zM526.5 612.6h5.7v5.7h-5.7zM543.6 614h5.7v5.7h-5.7zM581.8 613.3h5.7v5.7h-5.7zM421.4 625.9h5.7v5.7h-5.7zM550.4 622.2h5.7v5.7h-5.7zM552.8 630.7h5.7v5.7h-5.7zM537.1 632.1h5.7v5.7h-5.7zM522.4 635.5h5.7v5.7h-5.7zM518.7 642.3h5.7v5.7h-5.7zM522.4 644h5.7v5.7h-5.7zM428.6 647.8h5.7v5.7h-5.7zM522.4 655.3h5.7v5.7h-5.7zM521.4 659.4h5.7v5.7h-5.7zM554.8 656.3h5.7v5.7h-5.7zM596.5 651.9h5.7v5.7h-5.7zM436.1 663.8h5.7v5.7h-5.7zM449.1 661.1h5.7v5.7h-5.7zM449.1 664.5h5.7v5.7h-5.7zM473 658h5.7v5.7h-5.7zM475.3 661.1h5.7v5.7h-5.7zM479.8 665.5h5.7v5.7h-5.7zM560.6 662.8h5.7v5.7h-5.7zM573.3 662.1h5.7v5.7h-5.7zM548.7 666.5h5.7v5.7h-5.7zM805.5 468.6h5.7v5.7h-5.7zM799.7 483h5.7v5.7h-5.7zM794.6 509.6h5.7v5.7h-5.7zM793.6 516.4h5.7v5.7h-5.7zM791.9 525.6h5.7v5.7h-5.7zM791.9 530.7h5.7v5.7h-5.7zM802.8 574.1h5.7v5.7h-5.7zM807.2 595.6h5.7v5.7h-5.7zM824.3 596.6h5.7v5.7h-5.7zM838.9 493.2h5.7v5.7h-5.7zM833.5 522.9h5.7v5.7h-5.7zM834.5 548.8h5.7v5.7h-5.7zM866.2 570.3h5.7v5.7h-5.7zM641.7 478.5h5.7v5.7h-5.7zM638.3 484h5.7v5.7h-5.7zM633.2 488.8h5.7v5.7h-5.7zM634.9 492.2h5.7v5.7h-5.7zM646.9 487.4h5.7v5.7h-5.7zM650.3 483h5.7v5.7h-5.7zM657.8 481.9h5.7v5.7h-5.7zM666.3 483h5.7v5.7h-5.7zM673.1 477.9h5.7v5.7h-5.7zM676.5 484h5.7v5.7h-5.7zM682.7 487.4h5.7v5.7h-5.7zM677.6 492.5h5.7v5.7h-5.7zM669 488.1h5.7v5.7h-5.7zM670.1 494.9h5.7v5.7h-5.7zM669 500h5.7v5.7h-5.7zM668.4 504.5h5.7v5.7h-5.7zM666.3 518.1h5.7v5.7h-5.7zM650.9 523.9h5.7v5.7h-5.7zM653.7 526.6h5.7v5.7h-5.7zM657.1 528h5.7v5.7h-5.7zM661.5 528h5.7v5.7h-5.7zM665.6 526.3h5.7v5.7h-5.7zM640.7 545.1h5.7v5.7h-5.7zM634.9 553.9h5.7v5.7h-5.7zM632.5 567.2h5.7v5.7h-5.7zM607.6 557h5.7v5.7h-5.7zM611 557h5.7v5.7h-5.7zM611.7 573.4h5.7v5.7h-5.7zM620.2 568.9h5.7v5.7h-5.7zM617.9 575.8h5.7v5.7h-5.7zM624.7 576.8h5.7v5.7h-5.7zM629.8 579.5h5.7v5.7h-5.7zM612.7 588.7h5.7v5.7h-5.7zM612.7 593.2h5.7v5.7h-5.7zM608.3 597.3h5.7v5.7h-5.7zM619.6 588.7h5.7v5.7h-5.7zM624.7 588.1h5.7v5.7h-5.7zM629.8 587h5.7v5.7h-5.7zM634.2 588.1h5.7v5.7h-5.7zM642.4 590.4h5.7v5.7h-5.7zM649.6 588.7h5.7v5.7h-5.7zM660.5 583.6h5.7v5.7h-5.7zM674.5 575.4h5.7v5.7h-5.7zM682.7 574.8h5.7v5.7h-5.7zM691.5 573.7h5.7v5.7h-5.7zM721.2 581.9h5.7v5.7h-5.7zM741.7 585.3h5.7v5.7h-5.7zM752.6 581.2h5.7v5.7h-5.7zM782 580.9h5.7v5.7h-5.7zM599.1 613.6h5.7v5.7h-5.7zM859.1 613.6h5.7v5.7h-5.7zM699.7 613.6h5.7v5.7h-5.7zM704.9 613.6h5.7v5.7h-5.7zM713.4 613.6h5.7v5.7h-5.7zM716.1 616h5.7v5.7h-5.7zM720.2 618.8h5.7v5.7h-5.7zM728.7 613.6h5.7v5.7h-5.7zM722.9 622.9h5.7v5.7h-5.7zM712.4 627.3h5.7v5.7h-5.7zM698 628h5.7v5.7h-5.7zM701.4 631.4h5.7v5.7h-5.7zM704.9 633.1h5.7v5.7h-5.7zM728.7 630.7h5.7v5.7h-5.7zM734.5 633.1h5.7v5.7h-5.7zM725.3 639.2h5.7v5.7h-5.7zM733.9 636.5h5.7v5.7h-5.7zM704.9 645h5.7v5.7h-5.7zM708.3 651.2h5.7v5.7h-5.7zM711.7 653.6h5.7v5.7h-5.7zM718.5 648.4h5.7v5.7h-5.7zM706.6 655.3h5.7v5.7h-5.7zM739 659.7h5.7v5.7h-5.7zM744.1 651.2h5.7v5.7h-5.7zM750.2 651.2h5.7v5.7h-5.7zM749.2 655.3h5.7v5.7h-5.7zM710 662.1h5.7v5.7h-5.7zM716.8 663.8h5.7v5.7h-5.7zM773.1 631.4h5.7v5.7h-5.7zM775.8 634.1h5.7v5.7h-5.7zM785 636.5h5.7v5.7h-5.7zM788.4 639.9h5.7v5.7h-5.7zM791.2 641.6h5.7v5.7h-5.7zM774.1 646.7h5.7v5.7h-5.7zM773.1 651.9h5.7v5.7h-5.7zM778.2 650.1h5.7v5.7h-5.7zM784 648.4h5.7v5.7h-5.7zM793.6 651.9h5.7v5.7h-5.7zM800.4 648.4h5.7v5.7h-5.7zM802.1 653.6h5.7v5.7h-5.7zM795.9 657.7h5.7v5.7h-5.7zM777.2 662.1h5.7v5.7h-5.7zM788.4 664.5h5.7v5.7h-5.7zM810.6 664.5h5.7v5.7h-5.7zM815.7 664.5h5.7v5.7h-5.7zM611 635.5h5.7v5.7h-5.7zM605.9 639.9h5.7v5.7h-5.7zM601.5 644.4h5.7v5.7h-5.7zM599.1 648.4h5.7v5.7h-5.7zM626.4 637.2h5.7v5.7h-5.7zM633.2 646.1h5.7v5.7h-5.7zM633.9 660.4h5.7v5.7h-5.7zM669 639.2h5.7v5.7h-5.7zM679.3 639.9h5.7v5.7h-5.7zM668.4 650.8h5.7v5.7h-5.7zM672.4 656.3h5.7v5.7h-5.7zM670.7 662.1h5.7v5.7h-5.7zM684.4 654.2h5.7v5.7h-5.7zM682.7 660.4h5.7v5.7h-5.7zM422.1 295.1h5.7v5.7h-5.7zM700.7 613.8h5.7v5.7h-5.7zM703.7 613.8h5.7v5.7h-5.7zM714.5 615.4h5.7v5.7h-5.7zM714.5 619h5.7v5.7h-5.7zM722 622.7h5.7v5.7h-5.7zM728.9 613.4h5.7v5.7h-5.7zM699.1 629.2h5.7v5.7h-5.7zM699.1 633.9h5.7v5.7h-5.7zM703.9 629.2h5.7v5.7h-5.7zM703.9 633.9h5.7v5.7h-5.7zM712.4 627.4h5.7v5.7h-5.7zM730.5 630.1h5.7v5.7h-5.7zM730.5 634.3h5.7v5.7h-5.7zM734.1 630.1h5.7v5.7h-5.7zM734.1 634.3h5.7v5.7h-5.7zM725.8 639.1h5.7v5.7h-5.7zM706 648.4h5.7v5.7h-5.7zM706 651.4h5.7v5.7h-5.7zM706 654.3h5.7v5.7h-5.7zM710.7 648.4h5.7v5.7h-5.7zM710.7 651.4h5.7v5.7h-5.7zM710.7 654.3h5.7v5.7h-5.7zM719.3 648.6h5.7v5.7h-5.7zM744.3 649.9h5.7v5.7h-5.7zM744.3 652.9h5.7v5.7h-5.7zM747.3 649.9h5.7v5.7h-5.7zM747.3 652.9h5.7v5.7h-5.7zM750.3 649.9h5.7v5.7h-5.7zM750.3 652.9h5.7v5.7h-5.7zM739.1 659.6h5.7v5.7h-5.7zM711.5 663.3h5.7v5.7h-5.7zM714.5 663.3h5.7v5.7h-5.7zM717.5 663.3h5.7v5.7h-5.7zM772.8 631h5.7v5.7h-5.7zM772.8 633.4h5.7v5.7h-5.7zM775.2 631h5.7v5.7h-5.7zM775.2 633.4h5.7v5.7h-5.7zM785.8 637.3h5.7v5.7h-5.7zM785.8 640.9h5.7v5.7h-5.7zM789.4 637.3h5.7v5.7h-5.7zM789.4 640.9h5.7v5.7h-5.7zM771.6 647.9h5.7v5.7h-5.7zM771.6 652.1h5.7v5.7h-5.7zM776.3 647.9h5.7v5.7h-5.7zM776.3 652.1h5.7v5.7h-5.7zM784.2 648.6h5.7v5.7h-5.7zM801.3 649.9h5.7v5.7h-5.7zM801.3 652.9h5.7v5.7h-5.7zM795.8 657.5h5.7v5.7h-5.7zM777.4 663h5.7v5.7h-5.7zM789 664.4h5.7v5.7h-5.7zM810.6 665.3h5.7v5.7h-5.7zM815.3 665.3h5.7v5.7h-5.7zM729.5 666.4h5.7v5.7h-5.7zM761 666.1h5.7v5.7h-5.7zM316.7 84h5.7v5.7h-5.7zM315.4 92.2h5.7v5.7h-5.7zM318.8 78.5h5.7v5.7h-5.7zM310 100.4h5.7v5.7h-5.7zM312.5 100.4h5.7v5.7h-5.7zM325.7 90.8h5.7v5.7h-5.7zM329.6 90.8h5.7v5.7h-5.7zM321.6 99.1h5.7v5.7h-5.7zM321.6 101.6h5.7v5.7h-5.7zM324.9 99.1h5.7v5.7h-5.7zM324.9 101.6h5.7v5.7h-5.7zM328.2 99.1h5.7v5.7h-5.7zM328.2 101.6h5.7v5.7h-5.7zM320.8 108.6h5.7v5.7h-5.7zM328.5 109.3h5.7v5.7h-5.7zM331 109.3h5.7v5.7h-5.7zM340.1 90.9h5.7v5.7h-5.7zM340.1 93.4h5.7v5.7h-5.7zM342.6 90.9h5.7v5.7h-5.7zM342.6 93.4h5.7v5.7h-5.7zM340 99.1h5.7v5.7h-5.7zM340 101.6h5.7v5.7h-5.7zM340.1 110h5.7v5.7h-5.7zM342.6 110h5.7v5.7h-5.7zM346.8 114.1h5.7v5.7h-5.7zM352.4 92.2h5.7v5.7h-5.7zM357.6 92.2h5.7v5.7h-5.7zM357.2 100.5h5.7v5.7h-5.7zM357.2 103h5.7v5.7h-5.7zM361 100.5h5.7v5.7h-5.7zM361 103h5.7v5.7h-5.7zM350.3 108.6h5.7v5.7h-5.7zM353.6 108.6h5.7v5.7h-5.7zM356.9 108.6h5.7v5.7h-5.7zM364.6 108.6h5.7v5.7h-5.7zM371.4 94.9h5.7v5.7h-5.7zM381.7 95.6h5.7v5.7h-5.7zM376.9 104.5h5.7v5.7h-5.7zM383.7 103.1h5.7v5.7h-5.7zM382.3 113.4h5.7v5.7h-5.7zM368.7 112.7h5.7v5.7h-5.7zM394 96.3h5.7v5.7h-5.7zM391.9 103.1h5.7v5.7h-5.7zM388.5 107.9h5.7v5.7h-5.7zM407.6 94.9h5.7v5.7h-5.7zM406.3 101.9h5.7v5.7h-5.7zM406.3 104.4h5.7v5.7h-5.7zM406.3 110h5.7v5.7h-5.7zM400.1 115.4h5.7v5.7h-5.7zM405.6 118.2h5.7v5.7h-5.7zM411.7 120.2h5.7v5.7h-5.7zM419.9 118.2h5.7v5.7h-5.7zM422 95.6h5.7v5.7h-5.7zM426.1 99h5.7v5.7h-5.7zM415.3 104.5h5.7v5.7h-5.7zM417.8 104.5h5.7v5.7h-5.7zM419.3 110h5.7v5.7h-5.7zM415.2 114.1h5.7v5.7h-5.7zM429.6 105.3h5.7v5.7h-5.7zM429.6 107.8h5.7v5.7h-5.7zM432.1 105.3h5.7v5.7h-5.7zM432.1 107.8h5.7v5.7h-5.7zM433.7 115.4h5.7v5.7h-5.7zM436.2 115.4h5.7v5.7h-5.7zM427.5 114.1h5.7v5.7h-5.7zM441.8 102.6h5.7v5.7h-5.7zM441.8 106.4h5.7v5.7h-5.7zM440.5 111.3h5.7v5.7h-5.7zM313.3 122.3h5.7v5.7h-5.7zM314.7 128.4h5.7v5.7h-5.7zM340.6 123.6h5.7v5.7h-5.7zM346.8 123h5.7v5.7h-5.7zM335.2 131.8h5.7v5.7h-5.7zM342 133.9h5.7v5.7h-5.7zM350.9 129.1h5.7v5.7h-5.7zM359.9 126.4h5.7v5.7h-5.7zM362.4 126.4h5.7v5.7h-5.7zM355 132.6h5.7v5.7h-5.7zM355 135.1h5.7v5.7h-5.7zM363.2 136.6h5.7v5.7h-5.7zM353.6 140h5.7v5.7h-5.7zM344.1 141.4h5.7v5.7h-5.7zM378.2 127.7h5.7v5.7h-5.7zM372.8 133.2h5.7v5.7h-5.7zM374.8 138.7h5.7v5.7h-5.7zM383 135.3h5.7v5.7h-5.7zM390.6 136.6h5.7v5.7h-5.7zM390.7 129.8h5.7v5.7h-5.7zM395.9 129.8h5.7v5.7h-5.7zM386.4 140.7h5.7v5.7h-5.7zM404.3 129.1h5.7v5.7h-5.7zM409.6 129.1h5.7v5.7h-5.7zM413.8 135.9h5.7v5.7h-5.7zM421.3 135.9h5.7v5.7h-5.7zM428.2 136.6h5.7v5.7h-5.7zM419.3 140.7h5.7v5.7h-5.7zM435.7 138h5.7v5.7h-5.7zM443.9 140h5.7v5.7h-5.7zM399.4 142.1h5.7v5.7h-5.7zM320.1 138h5.7v5.7h-5.7zM327 140.7h5.7v5.7h-5.7zM312.6 141.4h5.7v5.7h-5.7zM449.2 101h5.7v5.7h-5.7zM473.2 103.1h5.7v5.7h-5.7zM477.1 103.1h5.7v5.7h-5.7zM489.5 100.4h5.7v5.7h-5.7zM486.8 105.8h5.7v5.7h-5.7zM505.3 101h5.7v5.7h-5.7zM498.4 104.5h5.7v5.7h-5.7zM510.7 105.8h5.7v5.7h-5.7zM523 105.9h5.7v5.7h-5.7zM523 108.4h5.7v5.7h-5.7zM531.9 107.2h5.7v5.7h-5.7zM554.5 108.6h5.7v5.7h-5.7zM567.5 109.7h5.7v5.7h-5.7zM585.9 111.3h5.7v5.7h-5.7zM452.4 111.3h5.7v5.7h-5.7zM454.2 111.3h5.7v5.7h-5.7zM459.6 114h5.7v5.7h-5.7zM464.8 114h5.7v5.7h-5.7zM468.3 109.2h5.7v5.7h-5.7zM456.7 118.8h5.7v5.7h-5.7zM478.6 113.3h5.7v5.7h-5.7zM480 118.1h5.7v5.7h-5.7zM484.1 110.6h5.7v5.7h-5.7zM495 109.2h5.7v5.7h-5.7zM499.1 112.1h5.7v5.7h-5.7zM499.1 116h5.7v5.7h-5.7zM501.2 122.2h5.7v5.7h-5.7zM507.3 120.2h5.7v5.7h-5.7zM511.5 113.5h5.7v5.7h-5.7zM511.5 116h5.7v5.7h-5.7zM515.4 113.5h5.7v5.7h-5.7zM515.4 116h5.7v5.7h-5.7zM514.8 124.3h5.7v5.7h-5.7zM522.3 117.4h5.7v5.7h-5.7zM527.8 113.3h5.7v5.7h-5.7zM473.8 121.5h5.7v5.7h-5.7zM478.6 125.6h5.7v5.7h-5.7zM483.4 127.7h5.7v5.7h-5.7zM486.8 122.9h5.7v5.7h-5.7zM551.7 120.2h5.7v5.7h-5.7zM560.6 129.1h5.7v5.7h-5.7zM567.6 121.5h5.7v5.7h-5.7zM571.5 121.5h5.7v5.7h-5.7zM585.2 121.7h5.7v5.7h-5.7zM585.2 124.2h5.7v5.7h-5.7zM579.8 129.7h5.7v5.7h-5.7zM584.6 135.2h5.7v5.7h-5.7zM475.9 137.3h5.7v5.7h-5.7zM482.4 136.2h5.7v5.7h-5.7zM486.1 143.4h5.7v5.7h-5.7zM460.1 141.4h5.7v5.7h-5.7zM467.7 142.7h5.7v5.7h-5.7zM464 147.6h5.7v5.7h-5.7zM464 151.5h5.7v5.7h-5.7zM465.8 147.6h5.7v5.7h-5.7zM465.8 151.5h5.7v5.7h-5.7zM448.6 146.3h5.7v5.7h-5.7zM448.6 150.1h5.7v5.7h-5.7zM451.1 146.3h5.7v5.7h-5.7zM451.1 150.1h5.7v5.7h-5.7zM460.8 157.1h5.7v5.7h-5.7zM502.6 146.2h5.7v5.7h-5.7zM506.5 146.2h5.7v5.7h-5.7zM497.7 151.6h5.7v5.7h-5.7zM514.1 149.7h5.7v5.7h-5.7zM514.1 152.2h5.7v5.7h-5.7zM479.4 154.4h5.7v5.7h-5.7zM483.3 154.4h5.7v5.7h-5.7zM490.9 155h5.7v5.7h-5.7zM505.3 156.4h5.7v5.7h-5.7zM525.8 150.3h5.7v5.7h-5.7zM529.2 155.7h5.7v5.7h-5.7zM520.3 157.8h5.7v5.7h-5.7zM545.6 152.3h5.7v5.7h-5.7zM565.5 155h5.7v5.7h-5.7zM569.4 155h5.7v5.7h-5.7zM580.5 149.6h5.7v5.7h-5.7zM585.9 148.9h5.7v5.7h-5.7zM286.1 98.4h5.7v5.7h-5.7zM286.1 100.9h5.7v5.7h-5.7zM293.7 100.8h5.7v5.7h-5.7zM290.7 106.1h5.7v5.7h-5.7zM304.2 97.3h5.7v5.7h-5.7zM301.8 107.3h5.7v5.7h-5.7zM304.3 107.3h5.7v5.7h-5.7zM299.5 79.8h5.7v5.7h-5.7zM303 77.4h5.7v5.7h-5.7zM277.3 141.8h5.7v5.7h-5.7zM259.7 118.4h5.7v5.7h-5.7zM265.6 120.2h5.7v5.7h-5.7zM289 129.4h5.7v5.7h-5.7zM289 131.9h5.7v5.7h-5.7zM253.3 134.2h5.7v5.7h-5.7zM296 119h5.7v5.7h-5.7zM297.7 121.3h5.7v5.7h-5.7zM300.2 121.3h5.7v5.7h-5.7zM320 139.5h5.7v5.7h-5.7zM305.4 144.2h5.7v5.7h-5.7zM313 141.8h5.7v5.7h-5.7zM326.4 90.8h5.7v5.7h-5.7zM326.4 93.3h5.7v5.7h-5.7zM331.2 90.8h5.7v5.7h-5.7zM331.2 93.3h5.7v5.7h-5.7zM322.9 99.6h5.7v5.7h-5.7zM322.9 103.3h5.7v5.7h-5.7zM326.5 99.6h5.7v5.7h-5.7zM326.5 103.3h5.7v5.7h-5.7zM330 99.6h5.7v5.7h-5.7zM330 103.3h5.7v5.7h-5.7zM327 109.6h5.7v5.7h-5.7zM330.6 109.6h5.7v5.7h-5.7zM320 108.4h5.7v5.7h-5.7zM312.4 100.3h5.7v5.7h-5.7zM440.6 529.4h5.7v5.7h-5.7zM440.6 531.5h5.7v5.7h-5.7zM442.7 529.4h5.7v5.7h-5.7zM442.7 531.5h5.7v5.7h-5.7zM447.7 527.3h5.7v5.7h-5.7zM449.8 527.3h5.7v5.7h-5.7zM454.7 529.6h5.7v5.7h-5.7zM458.4 529.6h5.7v5.7h-5.7zM462 532.5h5.7v5.7h-5.7zM462 534.6h5.7v5.7h-5.7zM439.1 535.6h5.7v5.7h-5.7zM439.1 537.7h5.7v5.7h-5.7zM441.2 535.6h5.7v5.7h-5.7zM441.2 537.7h5.7v5.7h-5.7zM436.7 543.7h5.7v5.7h-5.7zM438.8 543.7h5.7v5.7h-5.7zM446.1 541.1h5.7v5.7h-5.7zM446.1 546.3h5.7v5.7h-5.7zM449.8 541.1h5.7v5.7h-5.7zM449.8 546.3h5.7v5.7h-5.7zM453.9 546.8h5.7v5.7h-5.7zM459.1 546.8h5.7v5.7h-5.7zM464.3 540.6h5.7v5.7h-5.7zM466.7 550h5.7v5.7h-5.7zM464.8 568.4h5.7v5.7h-5.7zM464.8 572.1h5.7v5.7h-5.7zM470.1 568.4h5.7v5.7h-5.7zM470.1 572.1h5.7v5.7h-5.7zM465.9 577.3h5.7v5.7h-5.7zM425.8 579.4h5.7v5.7h-5.7zM425.8 584.6h5.7v5.7h-5.7zM429.5 579.4h5.7v5.7h-5.7zM429.5 584.6h5.7v5.7h-5.7zM433.6 587.5h5.7v5.7h-5.7zM435.7 587.5h5.7v5.7h-5.7zM414.1 582.8h5.7v5.7h-5.7zM416.2 582.8h5.7v5.7h-5.7zM409.8 590.6h5.7v5.7h-5.7zM413.6 590.6h5.7v5.7h-5.7zM417.3 590.6h5.7v5.7h-5.7zM512.5 573.9h5.7v5.7h-5.7zM512.5 579.1h5.7v5.7h-5.7zM514.6 573.9h5.7v5.7h-5.7zM514.6 579.1h5.7v5.7h-5.7zM514.1 595.4h5.7v5.7h-5.7zM514.1 598.3h5.7v5.7h-5.7zM517.7 595.4h5.7v5.7h-5.7zM517.7 598.3h5.7v5.7h-5.7zM525.3 568.4h5.7v5.7h-5.7zM525.3 573.7h5.7v5.7h-5.7zM525.8 592.3h5.7v5.7h-5.7zM525.8 595.2h5.7v5.7h-5.7zM531 592.3h5.7v5.7h-5.7zM531 595.2h5.7v5.7h-5.7zM539.3 557.5h5.7v5.7h-5.7zM539.3 559.6h5.7v5.7h-5.7z" fill="#4a79ec"/>
</svg>
</div>

<!-- menu bar -->
<div class="a" style="left:0;top:0;width:1024px;height:23px;background:#535353"></div>
<div class="a" style="left:278px;top:4px;width:1px;height:15px;background:#4a4a4a"></div>
<div class="a" style="left:797px;top:4px;width:1px;height:15px;background:#4a4a4a"></div>
<div class="a" style="left:902px;top:4px;width:1px;height:15px;background:#4a4a4a"></div>
<div class="a" style="left:911px;top:4px;width:113px;height:14px;background:#434343"></div>
<!-- control bar -->
<div class="a" style="left:0;top:23px;width:1024px;height:28px;background:#535353;border-top:1px solid #4b4b4b;box-sizing:border-box"></div>
<div class="a" style="left:0;top:50px;width:1024px;height:1px;background:#484848"></div>
<!-- tab bar -->
<div class="a" style="left:0;top:51px;width:887px;height:23px;background:#464646"></div>
<div class="a" style="left:495px;top:51px;width:360px;height:22px;background:#535353"></div>
<div class="a" style="left:0;top:73px;width:873px;height:1px;background:#2a2a2a"></div>
<div class="a" style="left:52px;top:51px;width:1px;height:21px;background:#3a3a3a"></div>
<div class="a" style="left:124px;top:51px;width:1px;height:21px;background:#3a3a3a"></div>
<div class="a" style="left:196px;top:51px;width:1px;height:21px;background:#3a3a3a"></div>
<div class="a" style="left:267px;top:51px;width:1px;height:21px;background:#3a3a3a"></div>
<div class="a" style="left:332px;top:51px;width:1px;height:21px;background:#3a3a3a"></div>
<div class="a" style="left:406px;top:51px;width:1px;height:21px;background:#3a3a3a"></div>
<div class="a" style="left:494px;top:51px;width:1px;height:21px;background:#3a3a3a"></div>
<div class="a" style="left:855px;top:51px;width:1px;height:21px;background:#3a3a3a"></div>

<!-- vertical scrollbar -->
<div class="a" style="left:873px;top:73px;width:14px;height:597px;background:#4d4d4d"></div>
<div class="a" style="left:876px;top:362px;width:9px;height:18px;background:#5c5c5c;border-radius:4.5px"></div>
<!-- status bar -->
<div class="a" style="left:0;top:670px;width:887px;height:13px;background:#4a4a4a"></div>
<div class="a" style="left:0;top:670px;width:887px;height:1px;background:#3c3c3c"></div>
<div class="a" style="left:579px;top:671px;width:21px;height:11px;background:#5c5c5c;border-radius:5.5px"></div>
<div class="a" style="left:6px;top:671px;width:48px;height:12px;background:#525252"></div>
<div class="a" style="left:54px;top:671px;width:31px;height:12px;background:#424242"></div>
<div class="a" style="left:85px;top:671px;width:48px;height:12px;background:#525252"></div>

<!-- right dock -->
<div class="a" style="left:887px;top:51px;width:137px;height:632px;background:#424242"></div>
<div class="a" style="left:887px;top:51px;width:2px;height:632px;background:#3c3c3c"></div>
<!-- icon column groups -->
<div class="a" style="left:889px;top:61px;width:29px;height:52px;background:#535353"></div>
<div class="a" style="left:889px;top:115px;width:29px;height:75px;background:#535353"></div>
<div class="a" style="left:889px;top:192px;width:29px;height:74px;background:#535353"></div>
<div class="a" style="left:889px;top:268px;width:29px;height:53px;background:#535353"></div>
<div class="a" style="left:889px;top:323px;width:29px;height:75px;background:#535353"></div>
<div class="a" style="left:889px;top:400px;width:29px;height:74px;background:#535353"></div>
<div class="a" style="left:889px;top:476px;width:29px;height:207px;background:#515151"></div>
<!-- properties panel -->
<div class="a" style="left:921px;top:61px;width:103px;height:622px;background:#535353"></div>
<div class="a" style="left:921px;top:61px;width:103px;height:21px;background:#424242"></div>
<div class="a" style="left:921px;top:61px;width:51px;height:21px;background:#535353"></div>
<div class="a" style="left:973px;top:62px;width:46px;height:20px;background:#4a4a4a"></div>
<div class="a" style="left:921px;top:106px;width:103px;height:1px;background:#484848"></div>
<div class="a" style="left:921px;top:209px;width:103px;height:1px;background:#484848"></div>
<div class="a" style="left:921px;top:334px;width:103px;height:1px;background:#484848"></div>
<div class="a" style="left:921px;top:408px;width:103px;height:1px;background:#484848"></div>
<div class="a" style="left:921px;top:474px;width:103px;height:1px;background:#484848"></div>
<!-- inputs -->
<div class="a" style="left:965px;top:133px;width:43px;height:15px;background:#454545"></div>
<div class="a" style="left:965px;top:154px;width:43px;height:14px;background:#454545"></div>
<div class="a" style="left:965px;top:175px;width:29px;height:14px;background:#454545"></div>
<div class="a" style="left:995px;top:175px;width:13px;height:14px;background:#454545"></div>
<div class="a" style="left:986px;top:260px;width:13px;height:14px;background:#454545"></div>
<div class="a" style="left:1000px;top:260px;width:24px;height:14px;background:#454545"></div>
<div class="a" style="left:986px;top:283px;width:38px;height:14px;background:#454545"></div>
<div class="a" style="left:928px;top:505px;width:79px;height:16px;border:1px solid #6c6c6c;box-sizing:border-box"></div>
<div class="a" style="left:1015px;top:505px;width:20px;height:16px;border:1px solid #6c6c6c;box-sizing:border-box"></div>
<div class="a" style="left:928px;top:529px;width:110px;height:16px;border:1px solid #6c6c6c;box-sizing:border-box"></div>

<!-- control bar widgets -->
<div class="a" style="left:15px;top:30px;width:15px;height:15px;background:#000;border:1px solid #e8e8e8;box-sizing:border-box"></div>
<div class="a" style="left:20px;top:35px;width:5px;height:5px;background:#e8e8e8"></div>
<div class="a" style="left:85px;top:30px;width:48px;height:15px;background:#454545"></div>
<div class="a" style="left:134px;top:30px;width:13px;height:15px;background:#4a4a4a"></div>
<div class="a" style="left:153px;top:30px;width:71px;height:15px;background:#e6e6e6"></div>
<div class="a" style="left:158.5px;top:37px;width:30.5px;height:1.5px;background:#111"></div>
<div class="a" style="left:225px;top:30px;width:12px;height:15px;background:#4a4a4a"></div>
<div class="a" style="left:243px;top:30px;width:69px;height:15px;background:#e6e6e6"></div>
<div class="a" style="left:247px;top:37px;width:39px;height:1.5px;background:#111"></div>
<div class="a" style="left:313px;top:30px;width:12px;height:15px;background:#4a4a4a"></div>
<div class="a" style="left:366px;top:30px;width:39px;height:15px;background:#454545"></div>
<div class="a" style="left:406px;top:30px;width:12px;height:15px;background:#4a4a4a"></div>
<div class="a" style="left:448px;top:30px;width:16px;height:15px;background:#e6e6e6"></div>
<div class="a" style="left:555px;top:30px;width:13px;height:14px;background:#4c4c4c"></div>
<div class="a" style="left:569px;top:30px;width:39px;height:14px;background:#454545"></div>

<div class="a" style="left:873px;top:670px;width:14px;height:11px;background:#535353"></div>
<div class="a" style="left:0;top:681px;width:1024px;height:2px;background:#383838"></div>
<span class="t" id="t0" style="left:1.5px;top:5.9px;font-size:10.6px;line-height:10.6px;color:#e6e6e6;transform:scaleX(0.861);">Edit</span>
<span class="t" id="t1" style="left:29.7px;top:5.9px;font-size:10.6px;line-height:10.6px;color:#e6e6e6;transform:scaleX(0.881);">Object</span>
<span class="t" id="t2" style="left:69.5px;top:5.9px;font-size:10.6px;line-height:10.6px;color:#e6e6e6;transform:scaleX(0.848);">Type</span>
<span class="t" id="t3" style="left:100.8px;top:5.9px;font-size:10.6px;line-height:10.6px;color:#e6e6e6;transform:scaleX(0.862);">Select</span>
<span class="t" id="t4" style="left:137.0px;top:5.9px;font-size:10.6px;line-height:10.6px;color:#e6e6e6;transform:scaleX(0.870);">Effect</span>
<span class="t" id="t5" style="left:172.5px;top:5.9px;font-size:10.6px;line-height:10.6px;color:#e6e6e6;transform:scaleX(0.848);">View</span>
<span class="t" id="t6" style="left:203.4px;top:5.9px;font-size:10.6px;line-height:10.6px;color:#e6e6e6;transform:scaleX(0.900);">Window</span>
<span class="t" id="t7" style="left:249.4px;top:5.9px;font-size:10.6px;line-height:10.6px;color:#e6e6e6;transform:scaleX(0.845);">Help</span>
<span class="t" id="t8" style="left:807.5px;top:6.5px;font-size:10.4px;line-height:10.4px;color:#e6e6e6;transform:scaleX(0.827);">Essentials Classic</span>
<span class="t" id="t9" style="left:929.6px;top:6.7px;font-size:10.4px;line-height:10.4px;color:#8e8e8e;transform:scaleX(0.823);">Search Adobe Stock</span>
<span class="t" id="t10" style="left:54.7px;top:33.5px;font-size:9px;line-height:9px;color:#f0f0f0;transform:scaleX(0.852);border-bottom:1px dotted #aaa;padding-bottom:0px">Stroke:</span>
<span class="t" id="t11" style="left:100.8px;top:33.5px;font-size:9px;line-height:9px;color:#f0f0f0;transform:scaleX(0.893);">0.75 pt</span>
<span class="t" id="t12" style="left:193.0px;top:33.5px;font-size:9px;line-height:9px;color:#3a3a3a;transform:scaleX(0.862);">Uniform</span>
<span class="t" id="t13" style="left:289.7px;top:33.5px;font-size:9px;line-height:9px;color:#3a3a3a;transform:scaleX(0.814);">Basic</span>
<span class="t" id="t14" style="left:331.7px;top:33.5px;font-size:9px;line-height:9px;color:#f0f0f0;transform:scaleX(0.867);border-bottom:1px dotted #aaa">Opacity:</span>
<span class="t" id="t15" style="left:367.6px;top:33.5px;font-size:9px;line-height:9px;color:#f0f0f0;transform:scaleX(0.887);">100%</span>
<span class="t" id="t16" style="left:424.7px;top:33.5px;font-size:9px;line-height:9px;color:#f0f0f0;transform:scaleX(0.813);">Style:</span>
<span class="t" id="t17" style="left:519.8px;top:33.5px;font-size:9px;line-height:9px;color:#f0f0f0;transform:scaleX(0.834);border-bottom:1px dotted #aaa">Corners:</span>
<span class="t" id="t18" style="left:921.5px;top:33.5px;font-size:9px;line-height:9px;color:#f0f0f0;transform:scaleX(0.841);border-bottom:1px dotted #aaa">Transform</span>
<span class="t" id="t19" style="left:-10.0px;top:59.7px;font-size:9px;line-height:9px;color:#b2b2b2;transform:scaleX(0.942);font-weight:bold">michigan*</span>
<span class="t" id="t20" style="left:60.0px;top:59.7px;font-size:9px;line-height:9px;color:#b2b2b2;transform:scaleX(0.961);font-weight:bold">california*</span>
<span class="t" id="t21" style="left:131.2px;top:59.7px;font-size:9px;line-height:9px;color:#b2b2b2;transform:scaleX(0.910);font-weight:bold">wisconsin*</span>
<span class="t" id="t22" style="left:205.3px;top:59.7px;font-size:9px;line-height:9px;color:#b2b2b2;transform:scaleX(0.923);font-weight:bold">kentucky*</span>
<span class="t" id="t23" style="left:275.6px;top:59.7px;font-size:9px;line-height:9px;color:#b2b2b2;transform:scaleX(0.964);font-weight:bold">georgia*</span>
<span class="t" id="t24" style="left:340.3px;top:59.7px;font-size:9px;line-height:9px;color:#b2b2b2;transform:scaleX(0.905);font-weight:bold">tennessee*</span>
<span class="t" id="t25" style="left:414.5px;top:59.7px;font-size:9px;line-height:9px;color:#b2b2b2;transform:scaleX(0.946);font-weight:bold">south dakota*</span>
<span class="t" id="t26" style="left:502.6px;top:59.7px;font-size:9px;line-height:9px;color:#f2f2f2;transform:scaleX(0.947);font-weight:bold">SO GOD MADE A FARMER MICHIGAN WITH UP SVG.svg* @ 50% (RGB/Preview)</span>
<span class="t" id="t27" style="left:928.0px;top:67.4px;font-size:9px;line-height:9px;color:#ffffff;transform:scaleX(0.851);font-weight:bold">Properties</span>
<span class="t" id="t28" style="left:980.5px;top:67.4px;font-size:9px;line-height:9px;color:#a8a8a8;transform:scaleX(0.829);font-weight:bold">Libraries</span>
<span class="t" id="t29" style="left:928.0px;top:91.3px;font-size:9px;line-height:9px;color:#d8d8d8;transform:scaleX(0.789);">Path</span>
<span class="t" id="t30" style="left:928.0px;top:117.3px;font-size:9px;line-height:9px;color:#d8d8d8;transform:scaleX(0.854);">Transform</span>
<span class="t" id="t31" style="left:955.0px;top:136.8px;font-size:9px;line-height:9px;color:#d8d8d8;transform:scaleX(0.756);">X:</span>
<span class="t" id="t32" style="left:968.4px;top:136.8px;font-size:9px;line-height:9px;color:#f0f0f0;transform:scaleX(0.887);">15.85 in</span>
<span class="t" id="t33" style="left:1021.5px;top:136.8px;font-size:9px;line-height:9px;color:#d8d8d8;transform:scaleX(0.773);">W:</span>
<span class="t" id="t34" style="left:955.0px;top:157.0px;font-size:9px;line-height:9px;color:#d8d8d8;transform:scaleX(0.850);">Y:</span>
<span class="t" id="t35" style="left:968.4px;top:157.0px;font-size:9px;line-height:9px;color:#f0f0f0;transform:scaleX(0.889);">16.005 in</span>
<span class="t" id="t36" style="left:1022.0px;top:157.0px;font-size:9px;line-height:9px;color:#d8d8d8;transform:scaleX(0.778);">H:</span>
<span class="t" id="t37" style="left:961.0px;top:177.3px;font-size:9px;line-height:9px;color:#d8d8d8;transform:scaleX(0.500);">:</span>
<span class="t" id="t38" style="left:967.0px;top:177.8px;font-size:9px;line-height:9px;color:#f0f0f0;transform:scaleX(0.956);">0°</span>
<span class="t" id="t39" style="left:928.0px;top:219.3px;font-size:9px;line-height:9px;color:#d8d8d8;transform:scaleX(0.833);">Appearance</span>
<span class="t" id="t40" style="left:951.8px;top:241.1px;font-size:9px;line-height:9px;color:#d8d8d8;transform:scaleX(0.750);">Fill</span>
<span class="t" id="t41" style="left:951.8px;top:263.8px;font-size:9px;line-height:9px;color:#f0f0f0;transform:scaleX(0.842);border-bottom:1px dotted #bbb">Stroke</span>
<span class="t" id="t42" style="left:1001.7px;top:263.8px;font-size:9px;line-height:9px;color:#f0f0f0;transform:scaleX(0.904);">0.75 pt</span>
<span class="t" id="t43" style="left:951.8px;top:286.7px;font-size:9px;line-height:9px;color:#f0f0f0;transform:scaleX(0.835);border-bottom:1px dotted #bbb">Opacity</span>
<span class="t" id="t44" style="left:988.0px;top:286.7px;font-size:9px;line-height:9px;color:#f0f0f0;transform:scaleX(0.857);">100%</span>
<span class="t" id="t45" style="left:933.8px;top:307.9px;font-size:11px;line-height:11px;color:#d8d8d8;transform:scaleX(0.933);font-style:italic;font-family:"Liberation Serif",serif">fx.</span>
<span class="t" id="t46" style="left:928.0px;top:352.3px;font-size:9px;line-height:9px;color:#d8d8d8;transform:scaleX(0.850);">Align</span>
<span class="t" id="t47" style="left:928.0px;top:420.3px;font-size:9px;line-height:9px;color:#d8d8d8;transform:scaleX(0.854);">Pathfinder</span>
<span class="t" id="t48" style="left:928.0px;top:488.8px;font-size:9px;line-height:9px;color:#d8d8d8;transform:scaleX(0.858);">Quick Actions</span>
<span class="t" id="t49" style="left:948.2px;top:510.0px;font-size:9px;line-height:9px;color:#f0f0f0;transform:scaleX(0.869);">Offset Path</span>
<span class="t" id="t50" style="left:998.5px;top:534.3px;font-size:9px;line-height:9px;color:#f0f0f0;transform:scaleX(0.919);">Recolor</span>
<span class="t" id="t51" style="left:56.0px;top:672.8px;font-size:9px;line-height:9px;color:#e0e0e0;transform:scaleX(0.700);">1</span>
<span class="t" id="t52" style="left:185.0px;top:672.8px;font-size:9px;line-height:9px;color:#cfcfcf;transform:scaleX(0.857);">Direct Selection</span>
<svg width="1024" height="683" viewBox="0 0 1024 683" style="position:absolute;left:0;top:0">
<rect x="287.9" y="6.1" width="5.9" height="8.7" fill="#d2d2d2" />
<rect x="295" y="6.1" width="6.4" height="4.2" fill="#d2d2d2" />
<rect x="295" y="11.1" width="6.4" height="3.7" fill="#d2d2d2" />
<path d="M308.2 9.2 L311 11.6 L313.8 9.2" fill="none" stroke="#e6e6e6" stroke-width="1.2" stroke-linecap="round" stroke-linejoin="round"/>
<rect x="328.8" y="6.7" width="13" height="9.5" fill="#3c3c3c" stroke="#d2d2d2" stroke-width="1.2"/>
<path d="M334.3 8.7 L335.9 8.7 L335.9 11.6 L337.2 11.2 L337.6 11.9 L338.7 11.6 L339.1 12.3 L340.1 12.2 L340.5 13 L340.3 15.2 L339.4 16.4 L335.2 16.4 L333 13.9 L333 12.9 L334.3 13.3 Z" fill="#e6e6e6" stroke="none" stroke-width="1" />
<path d="M780.7 4.9 a4.2 4.2 0 0 1 4.2 4.2 c0 2 -2.2 3.4 -3 5.6 l-2.4 0 c-0.8 -2.2 -3 -3.6 -3 -5.6 a4.2 4.2 0 0 1 4.2 -4.2z" fill="none" stroke="#c9c9c9" stroke-width="1.1" />
<circle cx="780.7" cy="16.2" r="1.3" fill="#dcdcdc" stroke="none" stroke-width="1"/>
<path d="M885.6 10.8 L888.6 13.4 L891.6 10.8" fill="none" stroke="#e6e6e6" stroke-width="1.6" stroke-linecap="round" stroke-linejoin="round"/>
<circle cx="918.7" cy="9.4" r="3.2" fill="none" stroke="#d0d0d0" stroke-width="1.2"/>
<line x1="916.4" y1="11.8" x2="913.4" y2="14.8" stroke="#d0d0d0" stroke-width="1.3" />
<path d="M922.4 12.8 L926 12.8 L924.2 14.6Z" fill="#d0d0d0" stroke="none" stroke-width="1" />
<path d="M0 36.4 L2.8 38.6 L5.6 36.4" fill="none" stroke="#e6e6e6" stroke-width="1.2" stroke-linecap="round" stroke-linejoin="round"/>
<path d="M35 35.8 L37.7 38.6 L40.4 35.8" fill="none" stroke="#e6e6e6" stroke-width="1.2" stroke-linecap="round" stroke-linejoin="round"/>
<path d="M88.2 34.7 L91.3 32.4 L94.4 34.7" fill="none" stroke="#e6e6e6" stroke-width="1.2" stroke-linecap="round" stroke-linejoin="round"/>
<path d="M88.2 40.2 L91.3 42.6 L94.4 40.2" fill="none" stroke="#e6e6e6" stroke-width="1.2" stroke-linecap="round" stroke-linejoin="round"/>
<path d="M137.6 36 L140.4 38.6 L143.2 36" fill="none" stroke="#e6e6e6" stroke-width="1.2" stroke-linecap="round" stroke-linejoin="round"/>
<path d="M228.2 36 L231 38.6 L233.8 36" fill="none" stroke="#e6e6e6" stroke-width="1.2" stroke-linecap="round" stroke-linejoin="round"/>
<path d="M316 36 L318.8 38.6 L321.6 36" fill="none" stroke="#e6e6e6" stroke-width="1.2" stroke-linecap="round" stroke-linejoin="round"/>
<path d="M410.6 34 L414.3 36.9 L410.6 39.8" fill="none" stroke="#e6e6e6" stroke-width="1.35" stroke-linecap="round" stroke-linejoin="round"/>
<path d="M468.6 36 L471.6 39 L474.6 36" fill="none" stroke="#e6e6e6" stroke-width="1.5" stroke-linecap="round" stroke-linejoin="round"/>
<circle cx="498.6" cy="37.2" r="6.1" fill="#bcbcbc" stroke="#d8d8d8" stroke-width="0.8"/>
<path d="M498.6 37.2 L493.4 40.2 A6 6 0 0 0 497 43 Z" fill="#2c2c2c" stroke="none" stroke-width="1" />
<path d="M498.6 37.2 L498.6 31.2 M498.6 37.2 L503.8 34.2 M498.6 37.2 L503.8 40.2 M498.6 37.2 L498.6 43.2 M498.6 37.2 L493.4 34.2" fill="none" stroke="#8a8a8a" stroke-width="0.7" />
<circle cx="498.6" cy="37.2" r="1.6" fill="#e8e8e8" stroke="none" stroke-width="1"/>
<path d="M558.8 34.7 L561.6 32.4 L564.4 34.7" fill="none" stroke="#e6e6e6" stroke-width="1.2" stroke-linecap="round" stroke-linejoin="round"/>
<path d="M558.8 40.2 L561.6 42.5 L564.4 40.2" fill="none" stroke="#e6e6e6" stroke-width="1.2" stroke-linecap="round" stroke-linejoin="round"/>
<rect x="624.8" y="32.1" width="10.2" height="9.4" fill="none" stroke="#c8c8c8" stroke-width="1" stroke-dasharray="1 1.3"/>
<rect x="624" y="31.3" width="1.6" height="1.6" fill="#dadada" />
<rect x="629.1" y="31.3" width="1.6" height="1.6" fill="#dadada" />
<rect x="634.2" y="31.3" width="1.6" height="1.6" fill="#dadada" />
<rect x="624" y="36" width="1.6" height="1.6" fill="#dadada" />
<rect x="634.2" y="36" width="1.6" height="1.6" fill="#dadada" />
<rect x="624" y="40.7" width="1.6" height="1.6" fill="#dadada" />
<rect x="629.1" y="40.7" width="1.6" height="1.6" fill="#dadada" />
<rect x="634.2" y="40.7" width="1.6" height="1.6" fill="#dadada" />
<rect x="629.1" y="36" width="1.6" height="1.6" fill="#dadada" />
<path d="M638.2 36.8 L640.5 38.8 L642.8 36.8" fill="none" stroke="#e6e6e6" stroke-width="1.1" stroke-linecap="round" stroke-linejoin="round"/>
<rect x="655.7" y="29.4" width="1" height="14.1" fill="#c4c4c4" />
<rect x="657.5" y="31.3" width="6.4" height="4.4" fill="#d2d2d2" />
<rect x="657.5" y="37.7" width="10.3" height="4.3" fill="#d2d2d2" />
<rect x="681.9" y="29.4" width="1" height="14.1" fill="#c4c4c4" />
<rect x="679.3" y="31.3" width="6.5" height="4.4" fill="#d2d2d2" />
<rect x="677" y="37.7" width="10.8" height="4.3" fill="#d2d2d2" />
<rect x="709.1" y="29.4" width="1" height="14.1" fill="#c4c4c4" />
<rect x="702" y="31.3" width="6.3" height="4.4" fill="#d2d2d2" />
<rect x="697.8" y="37.7" width="10.5" height="4.3" fill="#d2d2d2" />
<rect x="720.4" y="30.1" width="15.1" height="1" fill="#c4c4c4" />
<rect x="723" y="31.8" width="4" height="10.7" fill="#d2d2d2" />
<rect x="729.2" y="31.8" width="4.4" height="6.8" fill="#d2d2d2" />
<rect x="740.4" y="36" width="15.6" height="1" fill="#c4c4c4" />
<rect x="744" y="31.3" width="3.7" height="10.7" fill="#d2d2d2" />
<rect x="749.7" y="33" width="3.9" height="6.6" fill="#d2d2d2" />
<rect x="761.9" y="42" width="14.1" height="1" fill="#c4c4c4" />
<rect x="764" y="31.3" width="4" height="10.3" fill="#d2d2d2" />
<rect x="770.2" y="34.9" width="4.4" height="6.7" fill="#d2d2d2" />
<rect x="785.8" y="30.1" width="14.2" height="1" fill="#c4c4c4" />
<rect x="790.2" y="32" width="6.4" height="3" fill="#d2d2d2" />
<rect x="785.8" y="37.4" width="14.2" height="1" fill="#c4c4c4" />
<rect x="789" y="38.8" width="8.8" height="4.2" fill="#d2d2d2" />
<rect x="806.8" y="32.7" width="13.6" height="1" fill="#c4c4c4" />
<rect x="810.2" y="31.3" width="6.8" height="3.7" fill="#d2d2d2" />
<rect x="806.8" y="40" width="13.6" height="1" fill="#c4c4c4" />
<rect x="808.8" y="38.6" width="9.2" height="3.8" fill="#d2d2d2" />
<rect x="831" y="30.3" width="6.5" height="3.3" fill="#d2d2d2" />
<rect x="827" y="34.2" width="15" height="1" fill="#c4c4c4" />
<rect x="829.9" y="37.7" width="9.1" height="3.7" fill="#d2d2d2" />
<rect x="827" y="42.2" width="15" height="1" fill="#c4c4c4" />
<rect x="852.5" y="29.4" width="1" height="14.6" fill="#c4c4c4" />
<rect x="854.6" y="32" width="3.9" height="9.6" fill="#d2d2d2" />
<rect x="860.5" y="29.4" width="1" height="14.6" fill="#c4c4c4" />
<rect x="862.4" y="33.3" width="3.4" height="6.7" fill="#d2d2d2" />
<rect x="875.5" y="29.4" width="1" height="14.6" fill="#c4c4c4" />
<rect x="874" y="32" width="4" height="9.6" fill="#d2d2d2" />
<rect x="882.6" y="29.4" width="1" height="14.6" fill="#c4c4c4" />
<rect x="881.2" y="33.3" width="3.8" height="6.7" fill="#d2d2d2" />
<rect x="894" y="32" width="3.8" height="9.6" fill="#d2d2d2" />
<rect x="898.5" y="29.4" width="1" height="14.6" fill="#c4c4c4" />
<rect x="901.7" y="33.3" width="3.3" height="6.7" fill="#d2d2d2" />
<rect x="905.8" y="29.4" width="1" height="14.6" fill="#c4c4c4" />
<rect x="966" y="34.8" width="3.3" height="4.3" fill="none" stroke="#cfcfcf" stroke-width="1"/>
<rect x="973" y="31.5" width="3.9" height="3.9" fill="none" stroke="#cfcfcf" stroke-width="1"/>
<path d="M970 35.6 L970 43 L972 41.2 L973.4 44 L974.6 43.4 L973.3 40.7 L976 40.6 Z" fill="#d8d8d8" stroke="none" stroke-width="1" />
<path d="M983 35 L985.9 37.8 L988.8 35" fill="none" stroke="#e6e6e6" stroke-width="1.2" stroke-linecap="round" stroke-linejoin="round"/>
<path d="M41.6 60.2 L46.4 65 M46.4 60.2 L41.6 65" fill="none" stroke="#a8a8a8" stroke-width="0.9" />
<path d="M112.9 60.2 L117.7 65 M117.7 60.2 L112.9 65" fill="none" stroke="#a8a8a8" stroke-width="0.9" />
<path d="M186 60.2 L190.8 65 M190.8 60.2 L186 65" fill="none" stroke="#a8a8a8" stroke-width="0.9" />
<path d="M256.2 60.2 L261 65 M261 60.2 L256.2 65" fill="none" stroke="#a8a8a8" stroke-width="0.9" />
<path d="M321.1 60.2 L325.9 65 M325.9 60.2 L321.1 65" fill="none" stroke="#a8a8a8" stroke-width="0.9" />
<path d="M395.6 60.2 L400.4 65 M400.4 60.2 L395.6 65" fill="none" stroke="#a8a8a8" stroke-width="0.9" />
<path d="M483 60.2 L487.8 65 M487.8 60.2 L483 65" fill="none" stroke="#a8a8a8" stroke-width="0.9" />
<path d="M844.4 60.2 L849.2 65 M849.2 60.2 L844.4 65" fill="none" stroke="#d6d6d6" stroke-width="0.9" />
<path d="M874 59.6 L877 62.2 L874 64.8" fill="none" stroke="#cfcfcf" stroke-width="1.3" stroke-linecap="round" stroke-linejoin="round"/>
<path d="M878.6 59.6 L881.6 62.2 L878.6 64.8" fill="none" stroke="#cfcfcf" stroke-width="1.3" stroke-linecap="round" stroke-linejoin="round"/>
<path d="M910.2 53.4 L908.2 55.4 L910.2 57.4" fill="none" stroke="#b4b4b4" stroke-width="1" stroke-linecap="round" stroke-linejoin="round"/>
<path d="M913.8 53.4 L911.8 55.4 L913.8 57.4" fill="none" stroke="#b4b4b4" stroke-width="1" stroke-linecap="round" stroke-linejoin="round"/>
<path d="M877 83 L880 80 L883 83" fill="none" stroke="#8a8a8a" stroke-width="1.1" stroke-linecap="round" stroke-linejoin="round"/>
<path d="M877 660.5 L880 663.5 L883 660.5" fill="none" stroke="#9a9a9a" stroke-width="1.1" stroke-linecap="round" stroke-linejoin="round"/>
<path d="M866 671.5 L868.5 674.5 L866 677.5" fill="none" stroke="#9a9a9a" stroke-width="1.1" stroke-linecap="round" stroke-linejoin="round"/>
<path d="M11.4 675.6 L13.6 677.8 L15.8 675.6" fill="none" stroke="#e6e6e6" stroke-width="1.3" stroke-linecap="round" stroke-linejoin="round"/>
<path d="M27 673.5 v6 M34.5 673.5 L29 676.5 L34.5 679.5Z" fill="#666666" stroke="#666666" stroke-width="1" />
<path d="M46.5 673.5 L41.5 676.5 L46.5 679.5Z" fill="#666666" stroke="none" stroke-width="1" />
<path d="M90 675.6 L92.3 677.8 L94.6 675.6" fill="none" stroke="#e6e6e6" stroke-width="1.3" stroke-linecap="round" stroke-linejoin="round"/>
<path d="M106.5 673.5 L111.5 676.5 L106.5 679.5Z" fill="#666666" stroke="none" stroke-width="1" />
<path d="M119.5 673.5 L125 676.5 L119.5 679.5Z M126.5 673.5 v6" fill="#666666" stroke="#666666" stroke-width="1" />
<path d="M296.4 673.3 L301 676.6 L296.4 680Z" fill="#d0d0d0" stroke="none" stroke-width="1" />
<path d="M312.4 674 L309.6 676.6 L312.4 679.2" fill="none" stroke="#9a9a9a" stroke-width="1.1" stroke-linecap="round" stroke-linejoin="round"/>
</svg><svg width="1024" height="683" viewBox="0 0 1024 683" style="position:absolute;left:0;top:0">
<line x1="896.5" y1="63.7" x2="911" y2="63.7" stroke="#3e3e3e" stroke-width="1.4" stroke-dasharray="1 1"/>
<line x1="896.5" y1="119" x2="911" y2="119" stroke="#3e3e3e" stroke-width="1.4" stroke-dasharray="1 1"/>
<line x1="896.5" y1="195.5" x2="911" y2="195.5" stroke="#3e3e3e" stroke-width="1.4" stroke-dasharray="1 1"/>
<line x1="896.5" y1="271.9" x2="911" y2="271.9" stroke="#3e3e3e" stroke-width="1.4" stroke-dasharray="1 1"/>
<line x1="896.5" y1="325.7" x2="911" y2="325.7" stroke="#3e3e3e" stroke-width="1.4" stroke-dasharray="1 1"/>
<line x1="896.5" y1="403.2" x2="911" y2="403.2" stroke="#3e3e3e" stroke-width="1.4" stroke-dasharray="1 1"/>
<path d="M905 72.8 c-4.6 0 -8 2.6 -8 6.2 c0 3 2.6 5.2 6.4 5.2 c1.6 0 2 -0.8 1.7 -1.6 c-0.4 -1.2 0.4 -2 1.8 -2 c2.8 0 4.8 -1.4 4.8 -3.6 c0 -2.6 -2.8 -4.2 -6.7 -4.2z" fill="#d4d4d4" stroke="none" stroke-width="1" />
<circle cx="900.2" cy="78.2" r="0.9" fill="#505050" stroke="none" stroke-width="1"/>
<circle cx="902.2" cy="81.2" r="0.9" fill="#505050" stroke="none" stroke-width="1"/>
<circle cx="903.4" cy="75.6" r="0.9" fill="#505050" stroke="none" stroke-width="1"/>
<circle cx="907" cy="75" r="0.9" fill="#505050" stroke="none" stroke-width="1"/>
<circle cx="909.4" cy="77.2" r="0.9" fill="#505050" stroke="none" stroke-width="1"/>
<defs><linearGradient id="cg" x1="0" y1="0" x2="1" y2="1"><stop offset="0" stop-color="#222"/><stop offset="1" stop-color="#d8d8d8"/></linearGradient><linearGradient id="gr" x1="0" y1="0" x2="1" y2="0"><stop offset="0" stop-color="#e8e8e8"/><stop offset="1" stop-color="#333"/></linearGradient></defs>
<path d="M898.1 95.8 L898.1 107.4 L910.8 107.4 A12.7 11.6 0 0 0 898.1 95.8Z" fill="url(#cg)" stroke="#e0e0e0" stroke-width="1" />
<rect x="897.4" y="128.8" width="13.8" height="9" fill="#cfcfcf" />
<rect x="898.4" y="129.9" width="3.3" height="2.9" fill="#6a6a6a" />
<rect x="902.5" y="129.9" width="3.3" height="2.9" fill="#909090" />
<rect x="906.6" y="129.9" width="3.3" height="2.9" fill="#5a5a5a" />
<rect x="898.4" y="133.6" width="3.3" height="2.9" fill="#909090" />
<rect x="902.5" y="133.6" width="3.3" height="2.9" fill="#5a5a5a" />
<rect x="906.6" y="133.6" width="3.3" height="2.9" fill="#6a6a6a" />
<rect x="901.2" y="158.2" width="7" height="5.4" fill="#d0d0d0" />
<path d="M903 158 L900.2 151.6 L899.2 149.2 L900.6 148.8 L901.8 151 L904 157.6Z M904.2 157.6 L903.2 149.6 L904 147.2 L905 149.4 L905.4 157.6Z M906 157.8 L907.8 152.4 C908.6 150.6 910 150.4 911.2 151.2 C909.8 151.8 909.4 152.8 908.8 154 L907 158Z" fill="#d6d6d6" stroke="none" stroke-width="1" />
<circle cx="904.6" cy="174.4" r="3.3" fill="#d4d4d4" stroke="none" stroke-width="1"/>
<circle cx="901.3" cy="178.8" r="3.3" fill="#d4d4d4" stroke="none" stroke-width="1"/>
<circle cx="907.9" cy="178.8" r="3.3" fill="#d4d4d4" stroke="none" stroke-width="1"/>
<path d="M904.6 177 L903.9 182 L901.6 184 L907.6 184 L905.3 182Z" fill="#d4d4d4" stroke="none" stroke-width="1" />
<rect x="897.2" y="204.7" width="14.1" height="1" fill="#d2d2d2" />
<rect x="897.2" y="207.8" width="14.1" height="1.8" fill="#d2d2d2" />
<rect x="897.2" y="211.5" width="14.1" height="2.8" fill="#d2d2d2" />
<rect x="897.7" y="227.5" width="13.1" height="8.8" fill="url(#gr)" stroke="#e0e0e0" stroke-width="1"/>
<circle cx="902.6" cy="253.2" r="5.3" fill="#cfcfcf" stroke="none" stroke-width="1"/>
<circle cx="905.9" cy="256.7" r="5.3" fill="#8c8c8c" stroke="#c4c4c4" stroke-width="0.9"/>
<circle cx="904.3" cy="286.4" r="4.8" fill="#d8d8d8" stroke="none" stroke-width="1"/>
<circle cx="904.3" cy="286.4" r="6.9" fill="none" stroke="#d0d0d0" stroke-width="1.2" stroke-dasharray="1.1 1.6"/>
<rect x="901.25" y="304.05" width="9.5" height="8.9" fill="none" stroke="#d4d4d4" stroke-width="1.1"/>
<rect x="897.75" y="308.55" width="6.7" height="6.5" fill="#535353" stroke="#d4d4d4" stroke-width="1.1"/>
<circle cx="901.1" cy="311.8" r="1.9" fill="none" stroke="#d4d4d4" stroke-width="0.9"/>
<path d="M904.3 334 L911 338 L904.3 342 L897.6 338Z" fill="#d8d8d8" stroke="none" stroke-width="1" />
<path d="M898 342 L904.3 346 L910.6 342" fill="none" stroke="#d8d8d8" stroke-width="1.7" />
<path d="M904 358.5 L898.5 358.5 L898.5 369.3 L910.3 369.3 L910.3 364.5" fill="none" stroke="#d8d8d8" stroke-width="1.2" />
<path d="M903.5 364.5 L911.6 357 M906.6 356.8 L911.8 356.8 L911.8 362" fill="none" stroke="#d8d8d8" stroke-width="1.2" />
<rect x="897.7" y="379.2" width="8.4" height="8.8" fill="none" stroke="#d4d4d4" stroke-width="1"/>
<rect x="901.2" y="383.8" width="9.6" height="7.7" fill="#535353" stroke="#d4d4d4" stroke-width="1"/>
<rect x="899.4" y="413.3" width="9.7" height="9.3" fill="none" stroke="#d4d4d4" stroke-width="1" stroke-dasharray="1.2 1"/>
<rect x="898.4" y="412.3" width="2" height="2" fill="#e0e0e0" />
<rect x="908.3" y="412.3" width="2" height="2" fill="#e0e0e0" />
<rect x="898.4" y="421.8" width="2" height="2" fill="#e0e0e0" />
<rect x="908.3" y="421.8" width="2" height="2" fill="#e0e0e0" />
<path d="M903 416 L906 418 L903 420Z" fill="#d4d4d4" stroke="none" stroke-width="1" />
<rect x="897.9" y="433" width="1" height="14" fill="#c4c4c4" />
<rect x="899.8" y="435.3" width="6.1" height="3.5" fill="#d2d2d2" />
<rect x="899.8" y="441.1" width="10.8" height="4.7" fill="#d2d2d2" />
<rect x="898" y="456.3" width="7.4" height="7.5" fill="#d8d8d8" />
<rect x="903.45" y="460.95" width="6.9" height="7.1" fill="#a8a8a8" stroke="#e0e0e0" stroke-width="0.9"/>
<rect x="928.45" y="143.45" width="3.5" height="3.5" fill="none" stroke="#cfcfcf" stroke-width="0.9"/>
<rect x="934.25" y="143.45" width="3.5" height="3.5" fill="none" stroke="#cfcfcf" stroke-width="0.9"/>
<rect x="940.05" y="143.45" width="3.5" height="3.5" fill="none" stroke="#cfcfcf" stroke-width="0.9"/>
<rect x="928.45" y="149.25" width="3.5" height="3.5" fill="none" stroke="#cfcfcf" stroke-width="0.9"/>
<rect x="933.8" y="148.8" width="4.4" height="4.4" fill="#ffffff" />
<rect x="940.05" y="149.25" width="3.5" height="3.5" fill="none" stroke="#cfcfcf" stroke-width="0.9"/>
<rect x="928.45" y="155.05" width="3.5" height="3.5" fill="none" stroke="#cfcfcf" stroke-width="0.9"/>
<rect x="934.25" y="155.05" width="3.5" height="3.5" fill="none" stroke="#cfcfcf" stroke-width="0.9"/>
<rect x="940.05" y="155.05" width="3.5" height="3.5" fill="none" stroke="#cfcfcf" stroke-width="0.9"/>
<path d="M951.4 183 L959.2 183 L957.2 177.6 Z" fill="none" stroke="#cfcfcf" stroke-width="0.9" />
<path d="M998.2 180.8 L1001 183.4 L1003.8 180.8" fill="none" stroke="#e6e6e6" stroke-width="1.3" stroke-linecap="round" stroke-linejoin="round"/>
<rect x="928.5" y="237.8" width="13.8" height="13.2" fill="#ffffff" />
<line x1="929" y1="250.5" x2="941.8" y2="238.3" stroke="#e0202a" stroke-width="1.5" />
<rect x="928.7" y="260.9" width="13.3" height="12.9" fill="#eaeaea" />
<rect x="929.7" y="261.9" width="11.3" height="10.9" fill="#050505" />
<rect x="931.3" y="263.5" width="8.1" height="7.7" fill="#4e4e4e" />
<rect x="932.75" y="264.85" width="5.2" height="5.1" fill="#3a3a3a" stroke="#d8d8d8" stroke-width="0.9"/>
<rect x="928.5" y="283.4" width="13.8" height="13.2" fill="#bdbdbd" />
<rect x="929.5" y="284.4" width="11.8" height="11.2" fill="#6a6a6a" />
<rect x="929.5" y="284.4" width="3.93" height="3.73" fill="#7c7c7c" />
<rect x="937.36" y="284.4" width="3.93" height="3.73" fill="#7c7c7c" />
<rect x="933.43" y="288.13" width="3.93" height="3.73" fill="#7c7c7c" />
<rect x="929.5" y="291.86" width="3.93" height="3.73" fill="#7c7c7c" />
<rect x="937.36" y="291.86" width="3.93" height="3.73" fill="#7c7c7c" />
<path d="M989.2 265.4 L992.2 262.8 L995.2 265.4" fill="none" stroke="#e6e6e6" stroke-width="1.3" stroke-linecap="round" stroke-linejoin="round"/>
<path d="M989.2 269.8 L992.2 272.4 L995.2 269.8" fill="none" stroke="#e6e6e6" stroke-width="1.3" stroke-linecap="round" stroke-linejoin="round"/>
<rect x="931.5" y="373.8" width="11" height="10.7" fill="none" stroke="#c8c8c8" stroke-width="1" stroke-dasharray="1 1.3"/>
<rect x="930.7" y="373" width="1.6" height="1.6" fill="#dadada" />
<rect x="936.2" y="373" width="1.6" height="1.6" fill="#dadada" />
<rect x="941.7" y="373" width="1.6" height="1.6" fill="#dadada" />
<rect x="930.7" y="378.35" width="1.6" height="1.6" fill="#dadada" />
<rect x="941.7" y="378.35" width="1.6" height="1.6" fill="#dadada" />
<rect x="930.7" y="383.7" width="1.6" height="1.6" fill="#dadada" />
<rect x="936.2" y="383.7" width="1.6" height="1.6" fill="#dadada" />
<rect x="941.7" y="383.7" width="1.6" height="1.6" fill="#dadada" />
<rect x="936.2" y="378.35" width="1.6" height="1.6" fill="#dadada" />
<path d="M945.2 379.2 L947.4 381.2 L949.6 379.2" fill="none" stroke="#e6e6e6" stroke-width="1.1" stroke-linecap="round" stroke-linejoin="round"/>
<rect x="959.8" y="371.8" width="1" height="14.9" fill="#c4c4c4" />
<rect x="961.7" y="374" width="8.2" height="4.6" fill="#d2d2d2" />
<rect x="961.7" y="379.9" width="10.9" height="4.1" fill="#d2d2d2" />
<rect x="989.5" y="371.8" width="1" height="14.9" fill="#c4c4c4" />
<rect x="986.9" y="374" width="7.4" height="4.6" fill="#d2d2d2" />
<rect x="984.7" y="379.9" width="11.1" height="4.1" fill="#d2d2d2" />
<rect x="1019.7" y="371.8" width="1" height="14.9" fill="#c4c4c4" />
<rect x="1011.7" y="374" width="7.1" height="4.6" fill="#d2d2d2" />
<rect x="1008" y="379.9" width="10.8" height="4.1" fill="#d2d2d2" />
<rect x="932.7" y="441.5" width="7.8" height="8" fill="#d6d6d6" />
<rect x="936.5" y="445" width="7.5" height="8" fill="#d6d6d6" />
<rect x="957" y="441.5" width="8" height="8" fill="#d6d6d6" />
<rect x="961.5" y="445.5" width="7" height="7" fill="#4a4a4a" stroke="#d6d6d6" stroke-width="1"/>
<rect x="982" y="442" width="7" height="7" fill="none" stroke="#d6d6d6" stroke-width="1"/>
<rect x="986" y="445.5" width="7.1" height="7" fill="none" stroke="#d6d6d6" stroke-width="1"/>
<rect x="985.5" y="445" width="4" height="4.5" fill="#d6d6d6" />
<rect x="1006" y="441.5" width="8" height="8" fill="#d6d6d6" />
<rect x="1010" y="445" width="8" height="8" fill="#d6d6d6" />
<rect x="1010" y="445" width="4" height="4.5" fill="#3c3c3c" />
</svg>
</body></html>
